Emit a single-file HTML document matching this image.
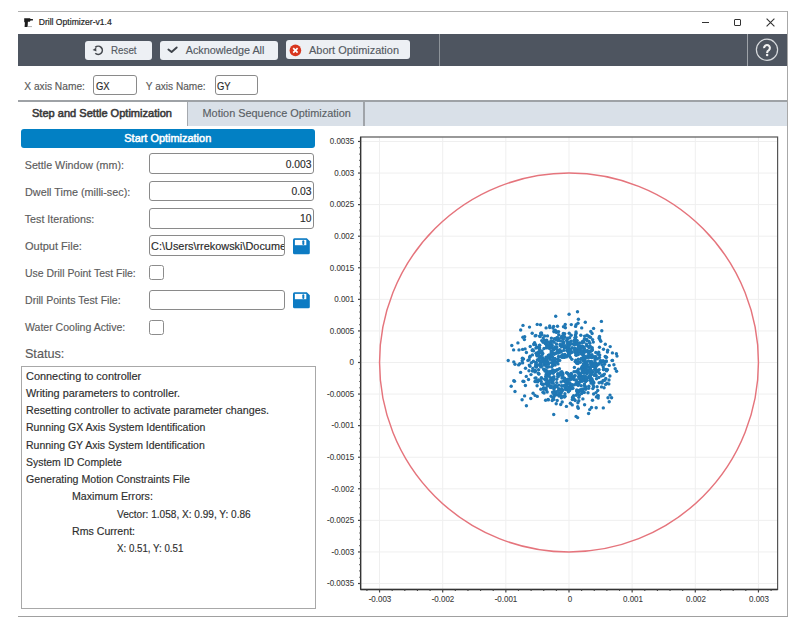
<!DOCTYPE html><html><head><meta charset="utf-8"><style>
html,body{margin:0;padding:0;}
body{width:800px;height:629px;position:relative;overflow:hidden;background:#fff;font-family:"Liberation Sans", sans-serif;}
div{-webkit-text-stroke:0.15px currentColor;}
</style></head><body>
<div style="position:absolute;left:18px;top:11px;width:769.5px;height:1.2px;background:#b0b0b0"></div><div style="position:absolute;left:786.5px;top:11px;width:1.2px;height:606px;background:#a8a8a8"></div><div style="position:absolute;left:18px;top:616.2px;width:769.5px;height:1.3px;background:#a0a0a0"></div><svg style="position:absolute;left:23px;top:17px" width="11" height="11" viewBox="0 0 11 11"><path d="M1.2 1.3 H7 L7.6 2 H9.9 V3.4 H7.6 L6.8 4.8 H4.9 L4.6 9.9 H1.6 L1.9 5.6 L1.2 4.9 Z" fill="#1c1c1c"/><rect x="4.8" y="9" width="4.2" height="1.1" fill="#b8b8b8"/></svg><div style="position:absolute;left:38.7px;top:18.32px;font-size:8.6px;line-height:8.6px;color:#262626;font-weight:normal;white-space:pre;-webkit-text-stroke:0.2px #262626">Drill Optimizer-v1.4</div><div style="position:absolute;left:701.5px;top:21.7px;width:7.5px;height:1.2px;background:#333"></div><div style="position:absolute;left:733.8px;top:18.8px;width:7.2px;height:7.2px;border:1.1px solid #333;box-sizing:border-box;border-radius:1px"></div><svg style="position:absolute;left:766px;top:18px" width="9" height="9" viewBox="0 0 9 9"><path d="M0.6 0.6 L8.4 8.4 M8.4 0.6 L0.6 8.4" stroke="#333" stroke-width="1.1"/></svg><div style="position:absolute;left:18px;top:33.8px;width:768.5px;height:32px;background:#4e5560"></div><div style="position:absolute;left:438.6px;top:33.8px;width:1.1px;height:32px;background:#8d9399"></div><div style="position:absolute;left:746.5px;top:33.8px;width:1.2px;height:32px;background:#9ea3a9"></div><svg style="position:absolute;left:755px;top:38px" width="24" height="24" viewBox="0 0 24 24"><circle cx="12" cy="11.8" r="10.6" fill="none" stroke="#d7dadd" stroke-width="1.2"/><path d="M9.1 10.1 A2.9 2.9 0 1 1 13.9 12.1 Q12.1 13.1 12.1 15" fill="none" stroke="#f2f2f2" stroke-width="2.1"/><circle cx="12.1" cy="17.1" r="1.25" fill="#f2f2f2"/></svg><div style="position:absolute;left:84.5px;top:40.5px;width:67.5px;height:19.2px;background:#edf0f4;border-radius:3px"></div><div style="position:absolute;left:159.5px;top:40.5px;width:118.5px;height:19.2px;background:#edf0f4;border-radius:3px"></div><div style="position:absolute;left:285.6px;top:40.3px;width:124.4px;height:19.2px;background:#edf0f4;border-radius:3px"></div><svg style="position:absolute;left:92px;top:43.5px" width="13" height="13" viewBox="0 0 13 13"><path d="M3.3 3.4 A4.1 4.1 0 1 1 3.3 9.2" fill="none" stroke="#44484e" stroke-width="1.6"/><path d="M0.6 6 L4.2 3.6 L4.4 7.6 Z" fill="#44484e"/></svg><svg style="position:absolute;left:166px;top:45px" width="13" height="10" viewBox="0 0 13 10"><path d="M2.4 4.5 L5.6 7 L10.7 2.5" fill="none" stroke="#3e434a" stroke-width="1.9" stroke-linecap="round" stroke-linejoin="round"/></svg><svg style="position:absolute;left:289px;top:43.5px" width="13" height="13" viewBox="0 0 13 13"><circle cx="6.4" cy="6.4" r="5.8" fill="#d8361f"/><path d="M4.2 4.2 L8.6 8.6 M8.6 4.2 L4.2 8.6" stroke="#fff" stroke-width="1.7"/></svg><div style="position:absolute;left:110.9px;top:45.16px;font-size:10.8px;line-height:10.8px;color:#545a62;font-weight:normal;white-space:pre;transform:scaleX(0.905);transform-origin:0 50%">Reset</div><div style="position:absolute;left:185.75px;top:45.16px;font-size:10.8px;line-height:10.8px;color:#545a62;font-weight:normal;white-space:pre;">Acknowledge All</div><div style="position:absolute;left:308.9px;top:45.16px;font-size:10.8px;line-height:10.8px;color:#545a62;font-weight:normal;white-space:pre;transform:scaleX(1.013);transform-origin:0 50%">Abort Optimization</div><div style="position:absolute;left:24.3px;top:81.67px;font-size:10.2px;line-height:10.2px;color:#5a5a5a;font-weight:normal;white-space:pre;">X axis Name:</div><div style="position:absolute;left:145.8px;top:81.75px;font-size:10.1px;line-height:10.1px;color:#5a5a5a;font-weight:normal;white-space:pre;">Y axis Name:</div><div style="position:absolute;left:93.3px;top:74.5px;width:43.5px;height:20.7px;border:1.2px solid #8a8a8a;border-radius:3px;box-sizing:border-box;background:#fff"></div><div style="position:absolute;left:214.7px;top:74.5px;width:43px;height:20.7px;border:1.2px solid #8a8a8a;border-radius:3px;box-sizing:border-box;background:#fff"></div><div style="position:absolute;left:96.1px;top:81.31px;font-size:10.5px;line-height:10.5px;color:#2a2a2a;font-weight:normal;white-space:pre;transform:scaleX(0.9);transform-origin:0 50%">GX</div><div style="position:absolute;left:217.3px;top:81.31px;font-size:10.5px;line-height:10.5px;color:#2a2a2a;font-weight:normal;white-space:pre;transform:scaleX(0.9);transform-origin:0 50%">GY</div><div style="position:absolute;left:18px;top:100.5px;width:768.5px;height:25px;background:#d9e0e8"></div><div style="position:absolute;left:18px;top:100.3px;width:768.5px;height:1.5px;background:#9ea2a6"></div><div style="position:absolute;left:18px;top:101.8px;width:169.5px;height:24px;background:#fff"></div><div style="position:absolute;left:187px;top:101.8px;width:1.3px;height:24px;background:#a5a9ae"></div><div style="position:absolute;left:363.4px;top:101.8px;width:1.5px;height:24px;background:#a0a4a9"></div><div style="position:absolute;left:32px;top:108.35px;font-size:11.05px;line-height:11.05px;color:#3a3a3a;font-weight:normal;white-space:pre;-webkit-text-stroke:0.55px #3a3a3a">Step and Settle Optimization</div><div style="position:absolute;left:202.5px;top:108.37px;font-size:10.9px;line-height:10.9px;color:#5a5f65;font-weight:normal;white-space:pre;">Motion Sequence Optimization</div><div style="position:absolute;left:20.6px;top:128.8px;width:294.4px;height:19.2px;background:#0280c4;border-radius:3px"></div><div style="position:absolute;left:124.3px;top:133.33px;font-size:10.95px;line-height:10.95px;color:#fff;font-weight:normal;white-space:pre;-webkit-text-stroke:0.5px #fff">Start Optimization</div><div style="position:absolute;left:24.75px;top:159.69px;font-size:10.7px;line-height:10.7px;color:#5c5c5c;font-weight:normal;white-space:pre;transform:scaleX(1.0);transform-origin:0 50%">Settle Window (mm):</div><div style="position:absolute;left:24.75px;top:186.69px;font-size:10.7px;line-height:10.7px;color:#5c5c5c;font-weight:normal;white-space:pre;transform:scaleX(1.013);transform-origin:0 50%">Dwell Time (milli-sec):</div><div style="position:absolute;left:24.75px;top:213.69px;font-size:10.7px;line-height:10.7px;color:#5c5c5c;font-weight:normal;white-space:pre;transform:scaleX(1.0);transform-origin:0 50%">Test Iterations:</div><div style="position:absolute;left:24.75px;top:240.69px;font-size:10.7px;line-height:10.7px;color:#5c5c5c;font-weight:normal;white-space:pre;transform:scaleX(1.03);transform-origin:0 50%">Output File:</div><div style="position:absolute;left:24.75px;top:267.69px;font-size:10.7px;line-height:10.7px;color:#5c5c5c;font-weight:normal;white-space:pre;transform:scaleX(0.978);transform-origin:0 50%">Use Drill Point Test File:</div><div style="position:absolute;left:24.75px;top:294.69px;font-size:10.7px;line-height:10.7px;color:#5c5c5c;font-weight:normal;white-space:pre;transform:scaleX(0.99);transform-origin:0 50%">Drill Points Test File:</div><div style="position:absolute;left:24.75px;top:321.69px;font-size:10.7px;line-height:10.7px;color:#5c5c5c;font-weight:normal;white-space:pre;transform:scaleX(0.985);transform-origin:0 50%">Water Cooling Active:</div><div style="position:absolute;left:149.4px;top:153.4px;width:164.6px;height:20.9px;border:1.2px solid #8a8a8a;border-radius:3px;box-sizing:border-box;background:#fff"></div><div style="position:absolute;right:488.5px;top:159.98px;font-size:10.3px;line-height:10.3px;color:#2a2a2a;font-weight:normal;white-space:pre;text-align:right;">0.003</div><div style="position:absolute;left:149.4px;top:180.6px;width:164.6px;height:20.9px;border:1.2px solid #8a8a8a;border-radius:3px;box-sizing:border-box;background:#fff"></div><div style="position:absolute;right:488.5px;top:187.18px;font-size:10.3px;line-height:10.3px;color:#2a2a2a;font-weight:normal;white-space:pre;text-align:right;">0.03</div><div style="position:absolute;left:149.4px;top:207.8px;width:164.6px;height:20.9px;border:1.2px solid #8a8a8a;border-radius:3px;box-sizing:border-box;background:#fff"></div><div style="position:absolute;right:488.5px;top:214.38px;font-size:10.3px;line-height:10.3px;color:#2a2a2a;font-weight:normal;white-space:pre;text-align:right;">10</div><div style="position:absolute;left:149.4px;top:235px;width:135.7px;height:21.2px;border:1.2px solid #8a8a8a;border-radius:3px;box-sizing:border-box;background:#fff"></div><div style="position:absolute;left:150.5px;top:236px;width:133.5px;height:19px;overflow:hidden"><div style="position:absolute;left:0.6px;top:4.97px;font-size:10.9px;line-height:10.9px;color:#2a2a2a;white-space:pre">C:\Users\rrekowski\Documents</div></div><div style="position:absolute;left:149.4px;top:289.8px;width:136px;height:20.4px;border:1.2px solid #8a8a8a;border-radius:3px;box-sizing:border-box;background:#fff"></div><svg style="position:absolute;left:293.4px;top:237.6px" width="17" height="17" viewBox="0 0 17 17"><path d="M1.5 0.2 H13.8 L16.8 3.2 V14.8 Q16.8 16.3 15.3 16.3 H1.5 Q0 16.3 0 14.8 V1.7 Q0 0.2 1.5 0.2 Z" fill="#0d7bc3"/><rect x="1.9" y="1.9" width="11.4" height="5.3" fill="#fff"/><rect x="9.3" y="2.3" width="2" height="4.6" rx="1" fill="#0d7bc3"/></svg><svg style="position:absolute;left:293.4px;top:291.6px" width="17" height="17" viewBox="0 0 17 17"><path d="M1.5 0.2 H13.8 L16.8 3.2 V14.8 Q16.8 16.3 15.3 16.3 H1.5 Q0 16.3 0 14.8 V1.7 Q0 0.2 1.5 0.2 Z" fill="#0d7bc3"/><rect x="1.9" y="1.9" width="11.4" height="5.3" fill="#fff"/><rect x="9.3" y="2.3" width="2" height="4.6" rx="1" fill="#0d7bc3"/></svg><div style="position:absolute;left:149.2px;top:265.1px;width:14.8px;height:15.2px;border:1.5px solid #8c8c8c;border-radius:2.5px;box-sizing:border-box;background:#fff"></div><div style="position:absolute;left:149.2px;top:319.8px;width:14.8px;height:15px;border:1.5px solid #8c8c8c;border-radius:2.5px;box-sizing:border-box;background:#fff"></div><div style="position:absolute;left:24.9px;top:347.65px;font-size:12.7px;line-height:12.7px;color:#5a5a5a;font-weight:normal;white-space:pre;">Status:</div><div style="position:absolute;left:20.6px;top:365.9px;width:295px;height:243px;border:1.2px solid #a8a8a8;box-sizing:border-box;background:#fff"></div><div style="position:absolute;left:25.75px;top:370.69px;font-size:10.7px;line-height:10.7px;color:#2e2e2e;font-weight:normal;white-space:pre;transform:scaleX(1.021);transform-origin:0 50%">Connecting to controller</div><div style="position:absolute;left:25.75px;top:387.93px;font-size:10.7px;line-height:10.7px;color:#2e2e2e;font-weight:normal;white-space:pre;transform:scaleX(1.018);transform-origin:0 50%">Writing parameters to controller.</div><div style="position:absolute;left:25.75px;top:405.17px;font-size:10.7px;line-height:10.7px;color:#2e2e2e;font-weight:normal;white-space:pre;transform:scaleX(1.005);transform-origin:0 50%">Resetting controller to activate parameter changes.</div><div style="position:absolute;left:25.75px;top:422.41px;font-size:10.7px;line-height:10.7px;color:#2e2e2e;font-weight:normal;white-space:pre;transform:scaleX(0.9835);transform-origin:0 50%">Running GX Axis System Identification</div><div style="position:absolute;left:25.75px;top:439.65px;font-size:10.7px;line-height:10.7px;color:#2e2e2e;font-weight:normal;white-space:pre;transform:scaleX(0.981);transform-origin:0 50%">Running GY Axis System Identification</div><div style="position:absolute;left:25.75px;top:456.89px;font-size:10.7px;line-height:10.7px;color:#2e2e2e;font-weight:normal;white-space:pre;transform:scaleX(0.977);transform-origin:0 50%">System ID Complete</div><div style="position:absolute;left:25.75px;top:474.13px;font-size:10.7px;line-height:10.7px;color:#2e2e2e;font-weight:normal;white-space:pre;transform:scaleX(0.992);transform-origin:0 50%">Generating Motion Constraints File</div><div style="position:absolute;left:71.6px;top:491.37px;font-size:10.7px;line-height:10.7px;color:#2e2e2e;font-weight:normal;white-space:pre;transform:scaleX(0.994);transform-origin:0 50%">Maximum Errors:</div><div style="position:absolute;left:117px;top:508.61px;font-size:10.7px;line-height:10.7px;color:#2e2e2e;font-weight:normal;white-space:pre;transform:scaleX(0.943);transform-origin:0 50%">Vector: 1.058, X: 0.99, Y: 0.86</div><div style="position:absolute;left:71.6px;top:525.85px;font-size:10.7px;line-height:10.7px;color:#2e2e2e;font-weight:normal;white-space:pre;transform:scaleX(0.992);transform-origin:0 50%">Rms Current:</div><div style="position:absolute;left:117px;top:543.09px;font-size:10.7px;line-height:10.7px;color:#2e2e2e;font-weight:normal;white-space:pre;transform:scaleX(0.91);transform-origin:0 50%">X: 0.51, Y: 0.51</div><svg style="position:absolute;left:0;top:0" width="800" height="629"><line x1="379.55" y1="137" x2="379.55" y2="589" stroke="#efefef" stroke-width="1"/><line x1="442.70" y1="137" x2="442.70" y2="589" stroke="#efefef" stroke-width="1"/><line x1="505.85" y1="137" x2="505.85" y2="589" stroke="#efefef" stroke-width="1"/><line x1="569.00" y1="137" x2="569.00" y2="589" stroke="#efefef" stroke-width="1"/><line x1="632.15" y1="137" x2="632.15" y2="589" stroke="#efefef" stroke-width="1"/><line x1="695.30" y1="137" x2="695.30" y2="589" stroke="#efefef" stroke-width="1"/><line x1="758.45" y1="137" x2="758.45" y2="589" stroke="#efefef" stroke-width="1"/><line x1="360.5" y1="583.52" x2="777.5" y2="583.52" stroke="#efefef" stroke-width="1"/><line x1="360.5" y1="551.95" x2="777.5" y2="551.95" stroke="#efefef" stroke-width="1"/><line x1="360.5" y1="520.38" x2="777.5" y2="520.38" stroke="#efefef" stroke-width="1"/><line x1="360.5" y1="488.80" x2="777.5" y2="488.80" stroke="#efefef" stroke-width="1"/><line x1="360.5" y1="457.23" x2="777.5" y2="457.23" stroke="#efefef" stroke-width="1"/><line x1="360.5" y1="425.65" x2="777.5" y2="425.65" stroke="#efefef" stroke-width="1"/><line x1="360.5" y1="394.07" x2="777.5" y2="394.07" stroke="#efefef" stroke-width="1"/><line x1="360.5" y1="362.50" x2="777.5" y2="362.50" stroke="#efefef" stroke-width="1"/><line x1="360.5" y1="330.93" x2="777.5" y2="330.93" stroke="#efefef" stroke-width="1"/><line x1="360.5" y1="299.35" x2="777.5" y2="299.35" stroke="#efefef" stroke-width="1"/><line x1="360.5" y1="267.77" x2="777.5" y2="267.77" stroke="#efefef" stroke-width="1"/><line x1="360.5" y1="236.20" x2="777.5" y2="236.20" stroke="#efefef" stroke-width="1"/><line x1="360.5" y1="204.62" x2="777.5" y2="204.62" stroke="#efefef" stroke-width="1"/><line x1="360.5" y1="173.05" x2="777.5" y2="173.05" stroke="#efefef" stroke-width="1"/><line x1="360.5" y1="141.47" x2="777.5" y2="141.47" stroke="#efefef" stroke-width="1"/><rect x="360.6" y="137" width="417" height="452.5" fill="none" stroke="#555" stroke-width="1.2"/><line x1="360.6" y1="137" x2="360.6" y2="589.2" stroke="#333" stroke-width="1.3"/><line x1="360.6" y1="589.5" x2="777.6" y2="589.5" stroke="#333" stroke-width="1.3"/><line x1="358" y1="583.52" x2="360.5" y2="583.52" stroke="#444" stroke-width="1.2"/><line x1="358" y1="551.95" x2="360.5" y2="551.95" stroke="#444" stroke-width="1.2"/><line x1="358" y1="520.38" x2="360.5" y2="520.38" stroke="#444" stroke-width="1.2"/><line x1="358" y1="488.80" x2="360.5" y2="488.80" stroke="#444" stroke-width="1.2"/><line x1="358" y1="457.23" x2="360.5" y2="457.23" stroke="#444" stroke-width="1.2"/><line x1="358" y1="425.65" x2="360.5" y2="425.65" stroke="#444" stroke-width="1.2"/><line x1="358" y1="394.07" x2="360.5" y2="394.07" stroke="#444" stroke-width="1.2"/><line x1="358" y1="362.50" x2="360.5" y2="362.50" stroke="#444" stroke-width="1.2"/><line x1="358" y1="330.93" x2="360.5" y2="330.93" stroke="#444" stroke-width="1.2"/><line x1="358" y1="299.35" x2="360.5" y2="299.35" stroke="#444" stroke-width="1.2"/><line x1="358" y1="267.77" x2="360.5" y2="267.77" stroke="#444" stroke-width="1.2"/><line x1="358" y1="236.20" x2="360.5" y2="236.20" stroke="#444" stroke-width="1.2"/><line x1="358" y1="204.62" x2="360.5" y2="204.62" stroke="#444" stroke-width="1.2"/><line x1="358" y1="173.05" x2="360.5" y2="173.05" stroke="#444" stroke-width="1.2"/><line x1="358" y1="141.47" x2="360.5" y2="141.47" stroke="#444" stroke-width="1.2"/><line x1="359.3" y1="577.21" x2="360.5" y2="577.21" stroke="#444" stroke-width="1.1"/><line x1="359.3" y1="570.89" x2="360.5" y2="570.89" stroke="#444" stroke-width="1.1"/><line x1="359.3" y1="564.58" x2="360.5" y2="564.58" stroke="#444" stroke-width="1.1"/><line x1="359.3" y1="558.26" x2="360.5" y2="558.26" stroke="#444" stroke-width="1.1"/><line x1="359.3" y1="545.63" x2="360.5" y2="545.63" stroke="#444" stroke-width="1.1"/><line x1="359.3" y1="539.32" x2="360.5" y2="539.32" stroke="#444" stroke-width="1.1"/><line x1="359.3" y1="533.00" x2="360.5" y2="533.00" stroke="#444" stroke-width="1.1"/><line x1="359.3" y1="526.69" x2="360.5" y2="526.69" stroke="#444" stroke-width="1.1"/><line x1="359.3" y1="514.06" x2="360.5" y2="514.06" stroke="#444" stroke-width="1.1"/><line x1="359.3" y1="507.75" x2="360.5" y2="507.75" stroke="#444" stroke-width="1.1"/><line x1="359.3" y1="501.43" x2="360.5" y2="501.43" stroke="#444" stroke-width="1.1"/><line x1="359.3" y1="495.12" x2="360.5" y2="495.12" stroke="#444" stroke-width="1.1"/><line x1="359.3" y1="482.49" x2="360.5" y2="482.49" stroke="#444" stroke-width="1.1"/><line x1="359.3" y1="476.17" x2="360.5" y2="476.17" stroke="#444" stroke-width="1.1"/><line x1="359.3" y1="469.86" x2="360.5" y2="469.86" stroke="#444" stroke-width="1.1"/><line x1="359.3" y1="463.54" x2="360.5" y2="463.54" stroke="#444" stroke-width="1.1"/><line x1="359.3" y1="450.91" x2="360.5" y2="450.91" stroke="#444" stroke-width="1.1"/><line x1="359.3" y1="444.60" x2="360.5" y2="444.60" stroke="#444" stroke-width="1.1"/><line x1="359.3" y1="438.28" x2="360.5" y2="438.28" stroke="#444" stroke-width="1.1"/><line x1="359.3" y1="431.97" x2="360.5" y2="431.97" stroke="#444" stroke-width="1.1"/><line x1="359.3" y1="419.33" x2="360.5" y2="419.33" stroke="#444" stroke-width="1.1"/><line x1="359.3" y1="413.02" x2="360.5" y2="413.02" stroke="#444" stroke-width="1.1"/><line x1="359.3" y1="406.70" x2="360.5" y2="406.70" stroke="#444" stroke-width="1.1"/><line x1="359.3" y1="400.39" x2="360.5" y2="400.39" stroke="#444" stroke-width="1.1"/><line x1="359.3" y1="387.76" x2="360.5" y2="387.76" stroke="#444" stroke-width="1.1"/><line x1="359.3" y1="381.44" x2="360.5" y2="381.44" stroke="#444" stroke-width="1.1"/><line x1="359.3" y1="375.13" x2="360.5" y2="375.13" stroke="#444" stroke-width="1.1"/><line x1="359.3" y1="368.81" x2="360.5" y2="368.81" stroke="#444" stroke-width="1.1"/><line x1="359.3" y1="356.19" x2="360.5" y2="356.19" stroke="#444" stroke-width="1.1"/><line x1="359.3" y1="349.87" x2="360.5" y2="349.87" stroke="#444" stroke-width="1.1"/><line x1="359.3" y1="343.56" x2="360.5" y2="343.56" stroke="#444" stroke-width="1.1"/><line x1="359.3" y1="337.24" x2="360.5" y2="337.24" stroke="#444" stroke-width="1.1"/><line x1="359.3" y1="324.61" x2="360.5" y2="324.61" stroke="#444" stroke-width="1.1"/><line x1="359.3" y1="318.30" x2="360.5" y2="318.30" stroke="#444" stroke-width="1.1"/><line x1="359.3" y1="311.98" x2="360.5" y2="311.98" stroke="#444" stroke-width="1.1"/><line x1="359.3" y1="305.67" x2="360.5" y2="305.67" stroke="#444" stroke-width="1.1"/><line x1="359.3" y1="293.03" x2="360.5" y2="293.03" stroke="#444" stroke-width="1.1"/><line x1="359.3" y1="286.72" x2="360.5" y2="286.72" stroke="#444" stroke-width="1.1"/><line x1="359.3" y1="280.40" x2="360.5" y2="280.40" stroke="#444" stroke-width="1.1"/><line x1="359.3" y1="274.09" x2="360.5" y2="274.09" stroke="#444" stroke-width="1.1"/><line x1="359.3" y1="261.46" x2="360.5" y2="261.46" stroke="#444" stroke-width="1.1"/><line x1="359.3" y1="255.15" x2="360.5" y2="255.15" stroke="#444" stroke-width="1.1"/><line x1="359.3" y1="248.83" x2="360.5" y2="248.83" stroke="#444" stroke-width="1.1"/><line x1="359.3" y1="242.52" x2="360.5" y2="242.52" stroke="#444" stroke-width="1.1"/><line x1="359.3" y1="229.88" x2="360.5" y2="229.88" stroke="#444" stroke-width="1.1"/><line x1="359.3" y1="223.57" x2="360.5" y2="223.57" stroke="#444" stroke-width="1.1"/><line x1="359.3" y1="217.26" x2="360.5" y2="217.26" stroke="#444" stroke-width="1.1"/><line x1="359.3" y1="210.94" x2="360.5" y2="210.94" stroke="#444" stroke-width="1.1"/><line x1="359.3" y1="198.31" x2="360.5" y2="198.31" stroke="#444" stroke-width="1.1"/><line x1="359.3" y1="192.00" x2="360.5" y2="192.00" stroke="#444" stroke-width="1.1"/><line x1="359.3" y1="185.68" x2="360.5" y2="185.68" stroke="#444" stroke-width="1.1"/><line x1="359.3" y1="179.37" x2="360.5" y2="179.37" stroke="#444" stroke-width="1.1"/><line x1="359.3" y1="166.73" x2="360.5" y2="166.73" stroke="#444" stroke-width="1.1"/><line x1="359.3" y1="160.42" x2="360.5" y2="160.42" stroke="#444" stroke-width="1.1"/><line x1="359.3" y1="154.11" x2="360.5" y2="154.11" stroke="#444" stroke-width="1.1"/><line x1="359.3" y1="147.79" x2="360.5" y2="147.79" stroke="#444" stroke-width="1.1"/><line x1="379.55" y1="589.5" x2="379.55" y2="592.5" stroke="#444" stroke-width="1.2"/><line x1="442.70" y1="589.5" x2="442.70" y2="592.5" stroke="#444" stroke-width="1.2"/><line x1="505.85" y1="589.5" x2="505.85" y2="592.5" stroke="#444" stroke-width="1.2"/><line x1="569.00" y1="589.5" x2="569.00" y2="592.5" stroke="#444" stroke-width="1.2"/><line x1="632.15" y1="589.5" x2="632.15" y2="592.5" stroke="#444" stroke-width="1.2"/><line x1="695.30" y1="589.5" x2="695.30" y2="592.5" stroke="#444" stroke-width="1.2"/><line x1="758.45" y1="589.5" x2="758.45" y2="592.5" stroke="#444" stroke-width="1.2"/><line x1="366.92" y1="589.5" x2="366.92" y2="590.9" stroke="#444" stroke-width="1.1"/><line x1="392.18" y1="589.5" x2="392.18" y2="590.9" stroke="#444" stroke-width="1.1"/><line x1="404.81" y1="589.5" x2="404.81" y2="590.9" stroke="#444" stroke-width="1.1"/><line x1="417.44" y1="589.5" x2="417.44" y2="590.9" stroke="#444" stroke-width="1.1"/><line x1="430.07" y1="589.5" x2="430.07" y2="590.9" stroke="#444" stroke-width="1.1"/><line x1="455.33" y1="589.5" x2="455.33" y2="590.9" stroke="#444" stroke-width="1.1"/><line x1="467.96" y1="589.5" x2="467.96" y2="590.9" stroke="#444" stroke-width="1.1"/><line x1="480.59" y1="589.5" x2="480.59" y2="590.9" stroke="#444" stroke-width="1.1"/><line x1="493.22" y1="589.5" x2="493.22" y2="590.9" stroke="#444" stroke-width="1.1"/><line x1="518.48" y1="589.5" x2="518.48" y2="590.9" stroke="#444" stroke-width="1.1"/><line x1="531.11" y1="589.5" x2="531.11" y2="590.9" stroke="#444" stroke-width="1.1"/><line x1="543.74" y1="589.5" x2="543.74" y2="590.9" stroke="#444" stroke-width="1.1"/><line x1="556.37" y1="589.5" x2="556.37" y2="590.9" stroke="#444" stroke-width="1.1"/><line x1="581.63" y1="589.5" x2="581.63" y2="590.9" stroke="#444" stroke-width="1.1"/><line x1="594.26" y1="589.5" x2="594.26" y2="590.9" stroke="#444" stroke-width="1.1"/><line x1="606.89" y1="589.5" x2="606.89" y2="590.9" stroke="#444" stroke-width="1.1"/><line x1="619.52" y1="589.5" x2="619.52" y2="590.9" stroke="#444" stroke-width="1.1"/><line x1="644.78" y1="589.5" x2="644.78" y2="590.9" stroke="#444" stroke-width="1.1"/><line x1="657.41" y1="589.5" x2="657.41" y2="590.9" stroke="#444" stroke-width="1.1"/><line x1="670.04" y1="589.5" x2="670.04" y2="590.9" stroke="#444" stroke-width="1.1"/><line x1="682.67" y1="589.5" x2="682.67" y2="590.9" stroke="#444" stroke-width="1.1"/><line x1="707.93" y1="589.5" x2="707.93" y2="590.9" stroke="#444" stroke-width="1.1"/><line x1="720.56" y1="589.5" x2="720.56" y2="590.9" stroke="#444" stroke-width="1.1"/><line x1="733.19" y1="589.5" x2="733.19" y2="590.9" stroke="#444" stroke-width="1.1"/><line x1="745.82" y1="589.5" x2="745.82" y2="590.9" stroke="#444" stroke-width="1.1"/><line x1="771.08" y1="589.5" x2="771.08" y2="590.9" stroke="#444" stroke-width="1.1"/><circle cx="569.0" cy="362.5" r="189.45" fill="none" stroke="#e5747c" stroke-width="1.45"/><circle cx="587.8" cy="355.6" r="1.7" fill="#1f77b4"/><circle cx="545.2" cy="343.5" r="1.7" fill="#1f77b4"/><circle cx="610.2" cy="346.6" r="1.7" fill="#1f77b4"/><circle cx="538.8" cy="352.3" r="1.7" fill="#1f77b4"/><circle cx="546.2" cy="383.8" r="1.7" fill="#1f77b4"/><circle cx="547.3" cy="374.1" r="1.7" fill="#1f77b4"/><circle cx="564.3" cy="357.4" r="1.7" fill="#1f77b4"/><circle cx="599.2" cy="338.2" r="1.7" fill="#1f77b4"/><circle cx="549.5" cy="373.6" r="1.7" fill="#1f77b4"/><circle cx="535.2" cy="335.9" r="1.7" fill="#1f77b4"/><circle cx="548.3" cy="399.9" r="1.7" fill="#1f77b4"/><circle cx="556.5" cy="344.0" r="1.7" fill="#1f77b4"/><circle cx="571.0" cy="379.2" r="1.7" fill="#1f77b4"/><circle cx="567.2" cy="346.6" r="1.7" fill="#1f77b4"/><circle cx="564.6" cy="378.3" r="1.7" fill="#1f77b4"/><circle cx="586.9" cy="367.3" r="1.7" fill="#1f77b4"/><circle cx="586.6" cy="339.5" r="1.7" fill="#1f77b4"/><circle cx="599.5" cy="357.5" r="1.7" fill="#1f77b4"/><circle cx="578.9" cy="376.2" r="1.7" fill="#1f77b4"/><circle cx="562.9" cy="374.0" r="1.7" fill="#1f77b4"/><circle cx="574.4" cy="376.3" r="1.7" fill="#1f77b4"/><circle cx="548.1" cy="362.3" r="1.7" fill="#1f77b4"/><circle cx="551.7" cy="382.7" r="1.7" fill="#1f77b4"/><circle cx="576.6" cy="383.9" r="1.7" fill="#1f77b4"/><circle cx="590.5" cy="361.9" r="1.7" fill="#1f77b4"/><circle cx="584.6" cy="336.1" r="1.7" fill="#1f77b4"/><circle cx="586.6" cy="345.9" r="1.7" fill="#1f77b4"/><circle cx="544.0" cy="348.5" r="1.7" fill="#1f77b4"/><circle cx="538.3" cy="373.2" r="1.7" fill="#1f77b4"/><circle cx="576.3" cy="384.1" r="1.7" fill="#1f77b4"/><circle cx="546.1" cy="342.5" r="1.7" fill="#1f77b4"/><circle cx="585.8" cy="369.7" r="1.7" fill="#1f77b4"/><circle cx="569.7" cy="337.8" r="1.7" fill="#1f77b4"/><circle cx="539.4" cy="380.3" r="1.7" fill="#1f77b4"/><circle cx="548.5" cy="347.6" r="1.7" fill="#1f77b4"/><circle cx="592.8" cy="372.2" r="1.7" fill="#1f77b4"/><circle cx="556.7" cy="382.6" r="1.7" fill="#1f77b4"/><circle cx="577.6" cy="417.6" r="1.7" fill="#1f77b4"/><circle cx="534.2" cy="343.6" r="1.7" fill="#1f77b4"/><circle cx="557.9" cy="373.7" r="1.7" fill="#1f77b4"/><circle cx="582.3" cy="341.8" r="1.7" fill="#1f77b4"/><circle cx="593.0" cy="356.8" r="1.7" fill="#1f77b4"/><circle cx="545.1" cy="342.8" r="1.7" fill="#1f77b4"/><circle cx="522.1" cy="399.8" r="1.7" fill="#1f77b4"/><circle cx="545.8" cy="343.7" r="1.7" fill="#1f77b4"/><circle cx="585.8" cy="389.2" r="1.7" fill="#1f77b4"/><circle cx="599.5" cy="347.2" r="1.7" fill="#1f77b4"/><circle cx="552.2" cy="345.5" r="1.7" fill="#1f77b4"/><circle cx="590.9" cy="361.8" r="1.7" fill="#1f77b4"/><circle cx="520.6" cy="372.4" r="1.7" fill="#1f77b4"/><circle cx="616.6" cy="371.2" r="1.7" fill="#1f77b4"/><circle cx="554.1" cy="396.6" r="1.7" fill="#1f77b4"/><circle cx="570.0" cy="388.0" r="1.7" fill="#1f77b4"/><circle cx="573.1" cy="397.6" r="1.7" fill="#1f77b4"/><circle cx="589.2" cy="367.0" r="1.7" fill="#1f77b4"/><circle cx="577.9" cy="393.1" r="1.7" fill="#1f77b4"/><circle cx="532.8" cy="368.4" r="1.7" fill="#1f77b4"/><circle cx="576.8" cy="363.3" r="1.7" fill="#1f77b4"/><circle cx="554.1" cy="394.6" r="1.7" fill="#1f77b4"/><circle cx="540.0" cy="356.8" r="1.7" fill="#1f77b4"/><circle cx="529.5" cy="327.1" r="1.7" fill="#1f77b4"/><circle cx="568.5" cy="352.4" r="1.7" fill="#1f77b4"/><circle cx="589.9" cy="380.3" r="1.7" fill="#1f77b4"/><circle cx="533.4" cy="361.2" r="1.7" fill="#1f77b4"/><circle cx="558.2" cy="376.8" r="1.7" fill="#1f77b4"/><circle cx="568.6" cy="374.5" r="1.7" fill="#1f77b4"/><circle cx="572.9" cy="388.2" r="1.7" fill="#1f77b4"/><circle cx="571.0" cy="377.2" r="1.7" fill="#1f77b4"/><circle cx="601.5" cy="376.0" r="1.7" fill="#1f77b4"/><circle cx="578.3" cy="345.6" r="1.7" fill="#1f77b4"/><circle cx="577.2" cy="391.0" r="1.7" fill="#1f77b4"/><circle cx="580.8" cy="389.7" r="1.7" fill="#1f77b4"/><circle cx="526.3" cy="376.4" r="1.7" fill="#1f77b4"/><circle cx="591.0" cy="363.0" r="1.7" fill="#1f77b4"/><circle cx="604.7" cy="380.3" r="1.7" fill="#1f77b4"/><circle cx="582.9" cy="380.4" r="1.7" fill="#1f77b4"/><circle cx="558.5" cy="339.1" r="1.7" fill="#1f77b4"/><circle cx="549.4" cy="374.3" r="1.7" fill="#1f77b4"/><circle cx="588.3" cy="377.5" r="1.7" fill="#1f77b4"/><circle cx="530.1" cy="356.2" r="1.7" fill="#1f77b4"/><circle cx="553.0" cy="365.2" r="1.7" fill="#1f77b4"/><circle cx="551.7" cy="367.0" r="1.7" fill="#1f77b4"/><circle cx="604.5" cy="364.2" r="1.7" fill="#1f77b4"/><circle cx="579.5" cy="342.9" r="1.7" fill="#1f77b4"/><circle cx="562.1" cy="357.4" r="1.7" fill="#1f77b4"/><circle cx="538.9" cy="374.1" r="1.7" fill="#1f77b4"/><circle cx="566.7" cy="340.2" r="1.7" fill="#1f77b4"/><circle cx="569.5" cy="384.2" r="1.7" fill="#1f77b4"/><circle cx="577.3" cy="371.0" r="1.7" fill="#1f77b4"/><circle cx="546.8" cy="380.1" r="1.7" fill="#1f77b4"/><circle cx="553.4" cy="361.4" r="1.7" fill="#1f77b4"/><circle cx="540.6" cy="361.8" r="1.7" fill="#1f77b4"/><circle cx="605.8" cy="378.5" r="1.7" fill="#1f77b4"/><circle cx="547.4" cy="371.8" r="1.7" fill="#1f77b4"/><circle cx="599.5" cy="336.5" r="1.7" fill="#1f77b4"/><circle cx="583.8" cy="357.4" r="1.7" fill="#1f77b4"/><circle cx="572.1" cy="388.6" r="1.7" fill="#1f77b4"/><circle cx="583.8" cy="342.2" r="1.7" fill="#1f77b4"/><circle cx="583.7" cy="379.0" r="1.7" fill="#1f77b4"/><circle cx="568.6" cy="355.2" r="1.7" fill="#1f77b4"/><circle cx="603.3" cy="367.1" r="1.7" fill="#1f77b4"/><circle cx="578.8" cy="347.2" r="1.7" fill="#1f77b4"/><circle cx="571.4" cy="352.5" r="1.7" fill="#1f77b4"/><circle cx="560.9" cy="393.3" r="1.7" fill="#1f77b4"/><circle cx="606.3" cy="360.9" r="1.7" fill="#1f77b4"/><circle cx="546.4" cy="382.8" r="1.7" fill="#1f77b4"/><circle cx="571.9" cy="384.8" r="1.7" fill="#1f77b4"/><circle cx="587.2" cy="350.6" r="1.7" fill="#1f77b4"/><circle cx="563.1" cy="341.6" r="1.7" fill="#1f77b4"/><circle cx="540.4" cy="352.5" r="1.7" fill="#1f77b4"/><circle cx="592.1" cy="333.5" r="1.7" fill="#1f77b4"/><circle cx="552.0" cy="371.2" r="1.7" fill="#1f77b4"/><circle cx="517.9" cy="342.9" r="1.7" fill="#1f77b4"/><circle cx="526.4" cy="405.7" r="1.7" fill="#1f77b4"/><circle cx="592.0" cy="354.8" r="1.7" fill="#1f77b4"/><circle cx="545.1" cy="359.3" r="1.7" fill="#1f77b4"/><circle cx="564.3" cy="347.8" r="1.7" fill="#1f77b4"/><circle cx="529.0" cy="370.8" r="1.7" fill="#1f77b4"/><circle cx="592.0" cy="357.5" r="1.7" fill="#1f77b4"/><circle cx="554.4" cy="338.7" r="1.7" fill="#1f77b4"/><circle cx="546.1" cy="365.0" r="1.7" fill="#1f77b4"/><circle cx="541.5" cy="332.9" r="1.7" fill="#1f77b4"/><circle cx="513.8" cy="380.8" r="1.7" fill="#1f77b4"/><circle cx="539.4" cy="361.1" r="1.7" fill="#1f77b4"/><circle cx="538.1" cy="353.4" r="1.7" fill="#1f77b4"/><circle cx="578.9" cy="384.0" r="1.7" fill="#1f77b4"/><circle cx="582.9" cy="366.7" r="1.7" fill="#1f77b4"/><circle cx="583.5" cy="392.0" r="1.7" fill="#1f77b4"/><circle cx="553.6" cy="348.5" r="1.7" fill="#1f77b4"/><circle cx="603.5" cy="349.2" r="1.7" fill="#1f77b4"/><circle cx="588.9" cy="353.2" r="1.7" fill="#1f77b4"/><circle cx="579.0" cy="377.0" r="1.7" fill="#1f77b4"/><circle cx="560.5" cy="345.7" r="1.7" fill="#1f77b4"/><circle cx="576.8" cy="350.8" r="1.7" fill="#1f77b4"/><circle cx="584.8" cy="367.9" r="1.7" fill="#1f77b4"/><circle cx="567.5" cy="338.6" r="1.7" fill="#1f77b4"/><circle cx="602.0" cy="364.8" r="1.7" fill="#1f77b4"/><circle cx="542.2" cy="361.5" r="1.7" fill="#1f77b4"/><circle cx="585.8" cy="364.5" r="1.7" fill="#1f77b4"/><circle cx="588.8" cy="352.3" r="1.7" fill="#1f77b4"/><circle cx="571.3" cy="324.6" r="1.7" fill="#1f77b4"/><circle cx="538.6" cy="369.7" r="1.7" fill="#1f77b4"/><circle cx="585.7" cy="381.5" r="1.7" fill="#1f77b4"/><circle cx="561.5" cy="356.4" r="1.7" fill="#1f77b4"/><circle cx="546.2" cy="388.0" r="1.7" fill="#1f77b4"/><circle cx="611.6" cy="397.8" r="1.7" fill="#1f77b4"/><circle cx="575.7" cy="355.1" r="1.7" fill="#1f77b4"/><circle cx="552.5" cy="365.4" r="1.7" fill="#1f77b4"/><circle cx="535.0" cy="381.5" r="1.7" fill="#1f77b4"/><circle cx="562.5" cy="373.1" r="1.7" fill="#1f77b4"/><circle cx="540.1" cy="336.6" r="1.7" fill="#1f77b4"/><circle cx="576.4" cy="379.9" r="1.7" fill="#1f77b4"/><circle cx="561.2" cy="375.2" r="1.7" fill="#1f77b4"/><circle cx="587.6" cy="364.6" r="1.7" fill="#1f77b4"/><circle cx="535.5" cy="371.3" r="1.7" fill="#1f77b4"/><circle cx="575.2" cy="361.6" r="1.7" fill="#1f77b4"/><circle cx="560.7" cy="404.5" r="1.7" fill="#1f77b4"/><circle cx="565.3" cy="381.5" r="1.7" fill="#1f77b4"/><circle cx="527.9" cy="360.4" r="1.7" fill="#1f77b4"/><circle cx="569.1" cy="387.1" r="1.7" fill="#1f77b4"/><circle cx="565.4" cy="327.8" r="1.7" fill="#1f77b4"/><circle cx="561.0" cy="351.3" r="1.7" fill="#1f77b4"/><circle cx="545.6" cy="400.2" r="1.7" fill="#1f77b4"/><circle cx="554.9" cy="385.8" r="1.7" fill="#1f77b4"/><circle cx="543.8" cy="360.6" r="1.7" fill="#1f77b4"/><circle cx="597.1" cy="386.8" r="1.7" fill="#1f77b4"/><circle cx="602.1" cy="361.5" r="1.7" fill="#1f77b4"/><circle cx="589.7" cy="409.6" r="1.7" fill="#1f77b4"/><circle cx="576.0" cy="331.9" r="1.7" fill="#1f77b4"/><circle cx="572.4" cy="343.9" r="1.7" fill="#1f77b4"/><circle cx="586.9" cy="370.6" r="1.7" fill="#1f77b4"/><circle cx="576.6" cy="384.2" r="1.7" fill="#1f77b4"/><circle cx="580.2" cy="374.2" r="1.7" fill="#1f77b4"/><circle cx="591.5" cy="361.5" r="1.7" fill="#1f77b4"/><circle cx="554.0" cy="331.8" r="1.7" fill="#1f77b4"/><circle cx="551.6" cy="345.0" r="1.7" fill="#1f77b4"/><circle cx="596.2" cy="407.7" r="1.7" fill="#1f77b4"/><circle cx="607.0" cy="383.2" r="1.7" fill="#1f77b4"/><circle cx="551.7" cy="351.3" r="1.7" fill="#1f77b4"/><circle cx="555.3" cy="371.3" r="1.7" fill="#1f77b4"/><circle cx="584.8" cy="359.9" r="1.7" fill="#1f77b4"/><circle cx="584.3" cy="392.4" r="1.7" fill="#1f77b4"/><circle cx="564.4" cy="346.3" r="1.7" fill="#1f77b4"/><circle cx="585.3" cy="322.3" r="1.7" fill="#1f77b4"/><circle cx="553.3" cy="377.8" r="1.7" fill="#1f77b4"/><circle cx="609.0" cy="380.0" r="1.7" fill="#1f77b4"/><circle cx="513.6" cy="349.9" r="1.7" fill="#1f77b4"/><circle cx="553.4" cy="380.1" r="1.7" fill="#1f77b4"/><circle cx="584.4" cy="348.4" r="1.7" fill="#1f77b4"/><circle cx="549.9" cy="342.7" r="1.7" fill="#1f77b4"/><circle cx="565.1" cy="345.9" r="1.7" fill="#1f77b4"/><circle cx="552.9" cy="328.0" r="1.7" fill="#1f77b4"/><circle cx="575.1" cy="352.4" r="1.7" fill="#1f77b4"/><circle cx="585.4" cy="376.4" r="1.7" fill="#1f77b4"/><circle cx="585.4" cy="365.4" r="1.7" fill="#1f77b4"/><circle cx="583.5" cy="346.6" r="1.7" fill="#1f77b4"/><circle cx="590.2" cy="351.3" r="1.7" fill="#1f77b4"/><circle cx="564.9" cy="337.3" r="1.7" fill="#1f77b4"/><circle cx="551.3" cy="356.8" r="1.7" fill="#1f77b4"/><circle cx="554.3" cy="354.3" r="1.7" fill="#1f77b4"/><circle cx="590.5" cy="369.5" r="1.7" fill="#1f77b4"/><circle cx="536.7" cy="365.6" r="1.7" fill="#1f77b4"/><circle cx="564.9" cy="354.5" r="1.7" fill="#1f77b4"/><circle cx="557.6" cy="359.2" r="1.7" fill="#1f77b4"/><circle cx="585.2" cy="362.7" r="1.7" fill="#1f77b4"/><circle cx="610.0" cy="395.1" r="1.7" fill="#1f77b4"/><circle cx="608.8" cy="383.9" r="1.7" fill="#1f77b4"/><circle cx="584.3" cy="385.5" r="1.7" fill="#1f77b4"/><circle cx="586.0" cy="339.4" r="1.7" fill="#1f77b4"/><circle cx="556.1" cy="385.6" r="1.7" fill="#1f77b4"/><circle cx="570.4" cy="403.2" r="1.7" fill="#1f77b4"/><circle cx="547.2" cy="370.9" r="1.7" fill="#1f77b4"/><circle cx="605.6" cy="384.4" r="1.7" fill="#1f77b4"/><circle cx="556.2" cy="338.6" r="1.7" fill="#1f77b4"/><circle cx="556.3" cy="392.5" r="1.7" fill="#1f77b4"/><circle cx="595.8" cy="352.5" r="1.7" fill="#1f77b4"/><circle cx="568.5" cy="353.9" r="1.7" fill="#1f77b4"/><circle cx="590.8" cy="363.6" r="1.7" fill="#1f77b4"/><circle cx="552.5" cy="381.2" r="1.7" fill="#1f77b4"/><circle cx="529.1" cy="359.8" r="1.7" fill="#1f77b4"/><circle cx="558.8" cy="388.6" r="1.7" fill="#1f77b4"/><circle cx="600.7" cy="360.8" r="1.7" fill="#1f77b4"/><circle cx="566.0" cy="355.6" r="1.7" fill="#1f77b4"/><circle cx="590.3" cy="375.9" r="1.7" fill="#1f77b4"/><circle cx="542.8" cy="353.4" r="1.7" fill="#1f77b4"/><circle cx="575.9" cy="340.0" r="1.7" fill="#1f77b4"/><circle cx="575.3" cy="337.7" r="1.7" fill="#1f77b4"/><circle cx="562.8" cy="357.0" r="1.7" fill="#1f77b4"/><circle cx="568.4" cy="391.8" r="1.7" fill="#1f77b4"/><circle cx="585.1" cy="370.2" r="1.7" fill="#1f77b4"/><circle cx="549.5" cy="356.2" r="1.7" fill="#1f77b4"/><circle cx="591.8" cy="372.6" r="1.7" fill="#1f77b4"/><circle cx="599.1" cy="369.8" r="1.7" fill="#1f77b4"/><circle cx="599.7" cy="354.9" r="1.7" fill="#1f77b4"/><circle cx="593.6" cy="387.0" r="1.7" fill="#1f77b4"/><circle cx="597.0" cy="365.5" r="1.7" fill="#1f77b4"/><circle cx="598.9" cy="377.5" r="1.7" fill="#1f77b4"/><circle cx="588.5" cy="361.0" r="1.7" fill="#1f77b4"/><circle cx="556.1" cy="348.4" r="1.7" fill="#1f77b4"/><circle cx="584.0" cy="364.7" r="1.7" fill="#1f77b4"/><circle cx="584.1" cy="349.5" r="1.7" fill="#1f77b4"/><circle cx="576.1" cy="333.5" r="1.7" fill="#1f77b4"/><circle cx="553.6" cy="359.8" r="1.7" fill="#1f77b4"/><circle cx="532.2" cy="333.2" r="1.7" fill="#1f77b4"/><circle cx="592.5" cy="382.8" r="1.7" fill="#1f77b4"/><circle cx="584.6" cy="404.8" r="1.7" fill="#1f77b4"/><circle cx="601.0" cy="382.1" r="1.7" fill="#1f77b4"/><circle cx="566.1" cy="386.1" r="1.7" fill="#1f77b4"/><circle cx="599.6" cy="373.2" r="1.7" fill="#1f77b4"/><circle cx="564.9" cy="346.4" r="1.7" fill="#1f77b4"/><circle cx="591.0" cy="364.5" r="1.7" fill="#1f77b4"/><circle cx="581.5" cy="372.9" r="1.7" fill="#1f77b4"/><circle cx="523.5" cy="358.9" r="1.7" fill="#1f77b4"/><circle cx="551.1" cy="353.1" r="1.7" fill="#1f77b4"/><circle cx="590.3" cy="375.4" r="1.7" fill="#1f77b4"/><circle cx="578.8" cy="397.3" r="1.7" fill="#1f77b4"/><circle cx="546.9" cy="379.1" r="1.7" fill="#1f77b4"/><circle cx="558.5" cy="356.5" r="1.7" fill="#1f77b4"/><circle cx="567.0" cy="389.7" r="1.7" fill="#1f77b4"/><circle cx="586.9" cy="357.1" r="1.7" fill="#1f77b4"/><circle cx="606.0" cy="369.5" r="1.7" fill="#1f77b4"/><circle cx="595.8" cy="367.0" r="1.7" fill="#1f77b4"/><circle cx="540.4" cy="364.8" r="1.7" fill="#1f77b4"/><circle cx="537.2" cy="355.9" r="1.7" fill="#1f77b4"/><circle cx="553.8" cy="387.1" r="1.7" fill="#1f77b4"/><circle cx="588.0" cy="392.8" r="1.7" fill="#1f77b4"/><circle cx="560.0" cy="344.5" r="1.7" fill="#1f77b4"/><circle cx="551.2" cy="351.0" r="1.7" fill="#1f77b4"/><circle cx="567.2" cy="341.6" r="1.7" fill="#1f77b4"/><circle cx="580.9" cy="376.6" r="1.7" fill="#1f77b4"/><circle cx="584.6" cy="365.8" r="1.7" fill="#1f77b4"/><circle cx="569.0" cy="345.3" r="1.7" fill="#1f77b4"/><circle cx="592.2" cy="347.7" r="1.7" fill="#1f77b4"/><circle cx="571.5" cy="374.8" r="1.7" fill="#1f77b4"/><circle cx="599.4" cy="337.5" r="1.7" fill="#1f77b4"/><circle cx="557.3" cy="369.8" r="1.7" fill="#1f77b4"/><circle cx="532.4" cy="354.9" r="1.7" fill="#1f77b4"/><circle cx="570.3" cy="384.6" r="1.7" fill="#1f77b4"/><circle cx="543.6" cy="384.3" r="1.7" fill="#1f77b4"/><circle cx="549.6" cy="348.6" r="1.7" fill="#1f77b4"/><circle cx="541.2" cy="381.4" r="1.7" fill="#1f77b4"/><circle cx="575.7" cy="337.3" r="1.7" fill="#1f77b4"/><circle cx="580.8" cy="335.2" r="1.7" fill="#1f77b4"/><circle cx="574.3" cy="341.6" r="1.7" fill="#1f77b4"/><circle cx="534.6" cy="342.8" r="1.7" fill="#1f77b4"/><circle cx="557.8" cy="374.4" r="1.7" fill="#1f77b4"/><circle cx="539.5" cy="349.6" r="1.7" fill="#1f77b4"/><circle cx="555.9" cy="339.8" r="1.7" fill="#1f77b4"/><circle cx="544.4" cy="340.1" r="1.7" fill="#1f77b4"/><circle cx="582.1" cy="381.2" r="1.7" fill="#1f77b4"/><circle cx="561.4" cy="397.8" r="1.7" fill="#1f77b4"/><circle cx="592.8" cy="364.2" r="1.7" fill="#1f77b4"/><circle cx="536.8" cy="347.2" r="1.7" fill="#1f77b4"/><circle cx="547.1" cy="360.7" r="1.7" fill="#1f77b4"/><circle cx="549.0" cy="384.2" r="1.7" fill="#1f77b4"/><circle cx="590.3" cy="351.6" r="1.7" fill="#1f77b4"/><circle cx="578.1" cy="351.4" r="1.7" fill="#1f77b4"/><circle cx="547.3" cy="367.3" r="1.7" fill="#1f77b4"/><circle cx="577.0" cy="391.4" r="1.7" fill="#1f77b4"/><circle cx="574.3" cy="344.4" r="1.7" fill="#1f77b4"/><circle cx="522.2" cy="360.7" r="1.7" fill="#1f77b4"/><circle cx="520.7" cy="330.0" r="1.7" fill="#1f77b4"/><circle cx="587.2" cy="335.5" r="1.7" fill="#1f77b4"/><circle cx="569.6" cy="349.0" r="1.7" fill="#1f77b4"/><circle cx="570.3" cy="357.3" r="1.7" fill="#1f77b4"/><circle cx="535.6" cy="344.7" r="1.7" fill="#1f77b4"/><circle cx="566.8" cy="350.6" r="1.7" fill="#1f77b4"/><circle cx="586.7" cy="378.7" r="1.7" fill="#1f77b4"/><circle cx="605.2" cy="356.5" r="1.7" fill="#1f77b4"/><circle cx="588.7" cy="346.8" r="1.7" fill="#1f77b4"/><circle cx="561.1" cy="351.9" r="1.7" fill="#1f77b4"/><circle cx="550.3" cy="373.3" r="1.7" fill="#1f77b4"/><circle cx="554.9" cy="360.8" r="1.7" fill="#1f77b4"/><circle cx="513.8" cy="361.9" r="1.7" fill="#1f77b4"/><circle cx="539.2" cy="358.4" r="1.7" fill="#1f77b4"/><circle cx="522.4" cy="358.3" r="1.7" fill="#1f77b4"/><circle cx="592.4" cy="349.9" r="1.7" fill="#1f77b4"/><circle cx="536.5" cy="366.8" r="1.7" fill="#1f77b4"/><circle cx="562.2" cy="402.0" r="1.7" fill="#1f77b4"/><circle cx="536.2" cy="367.0" r="1.7" fill="#1f77b4"/><circle cx="603.2" cy="375.6" r="1.7" fill="#1f77b4"/><circle cx="585.7" cy="386.7" r="1.7" fill="#1f77b4"/><circle cx="581.7" cy="327.9" r="1.7" fill="#1f77b4"/><circle cx="540.4" cy="363.8" r="1.7" fill="#1f77b4"/><circle cx="578.3" cy="408.3" r="1.7" fill="#1f77b4"/><circle cx="584.9" cy="357.8" r="1.7" fill="#1f77b4"/><circle cx="579.1" cy="373.7" r="1.7" fill="#1f77b4"/><circle cx="582.9" cy="398.9" r="1.7" fill="#1f77b4"/><circle cx="575.4" cy="335.1" r="1.7" fill="#1f77b4"/><circle cx="530.0" cy="366.3" r="1.7" fill="#1f77b4"/><circle cx="579.9" cy="345.7" r="1.7" fill="#1f77b4"/><circle cx="554.0" cy="388.8" r="1.7" fill="#1f77b4"/><circle cx="590.2" cy="346.2" r="1.7" fill="#1f77b4"/><circle cx="551.7" cy="380.4" r="1.7" fill="#1f77b4"/><circle cx="555.4" cy="370.5" r="1.7" fill="#1f77b4"/><circle cx="600.8" cy="341.2" r="1.7" fill="#1f77b4"/><circle cx="578.8" cy="400.8" r="1.7" fill="#1f77b4"/><circle cx="592.3" cy="366.4" r="1.7" fill="#1f77b4"/><circle cx="550.1" cy="359.4" r="1.7" fill="#1f77b4"/><circle cx="565.6" cy="384.6" r="1.7" fill="#1f77b4"/><circle cx="537.3" cy="396.4" r="1.7" fill="#1f77b4"/><circle cx="538.6" cy="380.0" r="1.7" fill="#1f77b4"/><circle cx="589.3" cy="336.9" r="1.7" fill="#1f77b4"/><circle cx="549.6" cy="358.1" r="1.7" fill="#1f77b4"/><circle cx="560.8" cy="372.3" r="1.7" fill="#1f77b4"/><circle cx="543.2" cy="338.0" r="1.7" fill="#1f77b4"/><circle cx="536.7" cy="380.6" r="1.7" fill="#1f77b4"/><circle cx="575.8" cy="336.7" r="1.7" fill="#1f77b4"/><circle cx="582.9" cy="371.3" r="1.7" fill="#1f77b4"/><circle cx="577.1" cy="352.0" r="1.7" fill="#1f77b4"/><circle cx="574.3" cy="399.5" r="1.7" fill="#1f77b4"/><circle cx="563.3" cy="333.5" r="1.7" fill="#1f77b4"/><circle cx="541.8" cy="334.5" r="1.7" fill="#1f77b4"/><circle cx="540.5" cy="356.4" r="1.7" fill="#1f77b4"/><circle cx="601.5" cy="386.9" r="1.7" fill="#1f77b4"/><circle cx="524.4" cy="339.6" r="1.7" fill="#1f77b4"/><circle cx="593.2" cy="363.2" r="1.7" fill="#1f77b4"/><circle cx="594.7" cy="374.9" r="1.7" fill="#1f77b4"/><circle cx="535.5" cy="366.2" r="1.7" fill="#1f77b4"/><circle cx="578.9" cy="391.7" r="1.7" fill="#1f77b4"/><circle cx="595.8" cy="356.7" r="1.7" fill="#1f77b4"/><circle cx="573.6" cy="395.6" r="1.7" fill="#1f77b4"/><circle cx="565.7" cy="388.7" r="1.7" fill="#1f77b4"/><circle cx="565.2" cy="387.8" r="1.7" fill="#1f77b4"/><circle cx="568.6" cy="347.9" r="1.7" fill="#1f77b4"/><circle cx="566.4" cy="406.4" r="1.7" fill="#1f77b4"/><circle cx="564.5" cy="347.6" r="1.7" fill="#1f77b4"/><circle cx="570.1" cy="378.3" r="1.7" fill="#1f77b4"/><circle cx="584.2" cy="368.6" r="1.7" fill="#1f77b4"/><circle cx="584.9" cy="380.6" r="1.7" fill="#1f77b4"/><circle cx="565.1" cy="396.3" r="1.7" fill="#1f77b4"/><circle cx="565.8" cy="389.6" r="1.7" fill="#1f77b4"/><circle cx="567.6" cy="350.4" r="1.7" fill="#1f77b4"/><circle cx="535.1" cy="395.4" r="1.7" fill="#1f77b4"/><circle cx="545.9" cy="361.4" r="1.7" fill="#1f77b4"/><circle cx="562.7" cy="375.0" r="1.7" fill="#1f77b4"/><circle cx="536.0" cy="378.0" r="1.7" fill="#1f77b4"/><circle cx="570.6" cy="349.7" r="1.7" fill="#1f77b4"/><circle cx="580.9" cy="348.4" r="1.7" fill="#1f77b4"/><circle cx="603.0" cy="380.7" r="1.7" fill="#1f77b4"/><circle cx="552.8" cy="397.8" r="1.7" fill="#1f77b4"/><circle cx="556.2" cy="391.8" r="1.7" fill="#1f77b4"/><circle cx="549.3" cy="347.2" r="1.7" fill="#1f77b4"/><circle cx="576.0" cy="383.4" r="1.7" fill="#1f77b4"/><circle cx="591.9" cy="378.7" r="1.7" fill="#1f77b4"/><circle cx="585.3" cy="351.6" r="1.7" fill="#1f77b4"/><circle cx="588.6" cy="413.5" r="1.7" fill="#1f77b4"/><circle cx="580.8" cy="390.3" r="1.7" fill="#1f77b4"/><circle cx="583.2" cy="354.4" r="1.7" fill="#1f77b4"/><circle cx="572.1" cy="347.7" r="1.7" fill="#1f77b4"/><circle cx="557.5" cy="326.2" r="1.7" fill="#1f77b4"/><circle cx="541.7" cy="340.6" r="1.7" fill="#1f77b4"/><circle cx="575.2" cy="375.6" r="1.7" fill="#1f77b4"/><circle cx="617.0" cy="356.1" r="1.7" fill="#1f77b4"/><circle cx="556.9" cy="352.7" r="1.7" fill="#1f77b4"/><circle cx="534.9" cy="371.9" r="1.7" fill="#1f77b4"/><circle cx="579.6" cy="390.3" r="1.7" fill="#1f77b4"/><circle cx="613.9" cy="364.7" r="1.7" fill="#1f77b4"/><circle cx="598.4" cy="364.2" r="1.7" fill="#1f77b4"/><circle cx="522.6" cy="362.9" r="1.7" fill="#1f77b4"/><circle cx="550.1" cy="344.0" r="1.7" fill="#1f77b4"/><circle cx="565.1" cy="347.1" r="1.7" fill="#1f77b4"/><circle cx="555.6" cy="394.7" r="1.7" fill="#1f77b4"/><circle cx="584.6" cy="351.6" r="1.7" fill="#1f77b4"/><circle cx="558.8" cy="385.1" r="1.7" fill="#1f77b4"/><circle cx="550.4" cy="380.1" r="1.7" fill="#1f77b4"/><circle cx="581.8" cy="376.4" r="1.7" fill="#1f77b4"/><circle cx="593.3" cy="385.4" r="1.7" fill="#1f77b4"/><circle cx="593.9" cy="382.7" r="1.7" fill="#1f77b4"/><circle cx="546.4" cy="347.9" r="1.7" fill="#1f77b4"/><circle cx="534.7" cy="370.8" r="1.7" fill="#1f77b4"/><circle cx="566.9" cy="384.2" r="1.7" fill="#1f77b4"/><circle cx="578.0" cy="349.7" r="1.7" fill="#1f77b4"/><circle cx="556.7" cy="379.3" r="1.7" fill="#1f77b4"/><circle cx="570.3" cy="388.3" r="1.7" fill="#1f77b4"/><circle cx="580.5" cy="352.2" r="1.7" fill="#1f77b4"/><circle cx="562.9" cy="355.5" r="1.7" fill="#1f77b4"/><circle cx="584.1" cy="388.8" r="1.7" fill="#1f77b4"/><circle cx="552.6" cy="341.1" r="1.7" fill="#1f77b4"/><circle cx="583.3" cy="340.9" r="1.7" fill="#1f77b4"/><circle cx="563.4" cy="385.8" r="1.7" fill="#1f77b4"/><circle cx="598.2" cy="371.9" r="1.7" fill="#1f77b4"/><circle cx="576.2" cy="395.3" r="1.7" fill="#1f77b4"/><circle cx="536.4" cy="353.3" r="1.7" fill="#1f77b4"/><circle cx="575.0" cy="337.6" r="1.7" fill="#1f77b4"/><circle cx="606.5" cy="357.2" r="1.7" fill="#1f77b4"/><circle cx="555.2" cy="365.1" r="1.7" fill="#1f77b4"/><circle cx="529.7" cy="357.2" r="1.7" fill="#1f77b4"/><circle cx="564.4" cy="397.1" r="1.7" fill="#1f77b4"/><circle cx="532.2" cy="350.5" r="1.7" fill="#1f77b4"/><circle cx="567.9" cy="355.6" r="1.7" fill="#1f77b4"/><circle cx="580.0" cy="376.4" r="1.7" fill="#1f77b4"/><circle cx="554.0" cy="388.6" r="1.7" fill="#1f77b4"/><circle cx="556.8" cy="362.4" r="1.7" fill="#1f77b4"/><circle cx="548.4" cy="356.0" r="1.7" fill="#1f77b4"/><circle cx="557.2" cy="400.5" r="1.7" fill="#1f77b4"/><circle cx="546.4" cy="359.8" r="1.7" fill="#1f77b4"/><circle cx="549.1" cy="355.0" r="1.7" fill="#1f77b4"/><circle cx="557.8" cy="376.4" r="1.7" fill="#1f77b4"/><circle cx="548.5" cy="364.0" r="1.7" fill="#1f77b4"/><circle cx="582.1" cy="342.6" r="1.7" fill="#1f77b4"/><circle cx="590.7" cy="373.6" r="1.7" fill="#1f77b4"/><circle cx="545.6" cy="370.0" r="1.7" fill="#1f77b4"/><circle cx="540.6" cy="366.8" r="1.7" fill="#1f77b4"/><circle cx="555.0" cy="358.5" r="1.7" fill="#1f77b4"/><circle cx="569.2" cy="355.4" r="1.7" fill="#1f77b4"/><circle cx="582.4" cy="351.1" r="1.7" fill="#1f77b4"/><circle cx="556.2" cy="353.2" r="1.7" fill="#1f77b4"/><circle cx="600.9" cy="362.4" r="1.7" fill="#1f77b4"/><circle cx="540.6" cy="352.3" r="1.7" fill="#1f77b4"/><circle cx="570.2" cy="344.3" r="1.7" fill="#1f77b4"/><circle cx="582.3" cy="370.7" r="1.7" fill="#1f77b4"/><circle cx="551.6" cy="354.2" r="1.7" fill="#1f77b4"/><circle cx="583.8" cy="348.5" r="1.7" fill="#1f77b4"/><circle cx="537.3" cy="359.9" r="1.7" fill="#1f77b4"/><circle cx="581.4" cy="368.1" r="1.7" fill="#1f77b4"/><circle cx="573.5" cy="379.2" r="1.7" fill="#1f77b4"/><circle cx="555.8" cy="331.5" r="1.7" fill="#1f77b4"/><circle cx="553.5" cy="349.9" r="1.7" fill="#1f77b4"/><circle cx="563.8" cy="342.8" r="1.7" fill="#1f77b4"/><circle cx="574.6" cy="347.9" r="1.7" fill="#1f77b4"/><circle cx="555.7" cy="316.3" r="1.7" fill="#1f77b4"/><circle cx="542.3" cy="354.5" r="1.7" fill="#1f77b4"/><circle cx="547.2" cy="392.0" r="1.7" fill="#1f77b4"/><circle cx="576.3" cy="361.7" r="1.7" fill="#1f77b4"/><circle cx="604.1" cy="387.8" r="1.7" fill="#1f77b4"/><circle cx="547.9" cy="383.6" r="1.7" fill="#1f77b4"/><circle cx="602.9" cy="375.3" r="1.7" fill="#1f77b4"/><circle cx="580.2" cy="349.6" r="1.7" fill="#1f77b4"/><circle cx="569.7" cy="382.6" r="1.7" fill="#1f77b4"/><circle cx="572.4" cy="385.0" r="1.7" fill="#1f77b4"/><circle cx="591.0" cy="383.0" r="1.7" fill="#1f77b4"/><circle cx="575.9" cy="371.7" r="1.7" fill="#1f77b4"/><circle cx="574.3" cy="376.3" r="1.7" fill="#1f77b4"/><circle cx="564.9" cy="393.7" r="1.7" fill="#1f77b4"/><circle cx="597.7" cy="390.5" r="1.7" fill="#1f77b4"/><circle cx="578.4" cy="352.2" r="1.7" fill="#1f77b4"/><circle cx="588.6" cy="357.4" r="1.7" fill="#1f77b4"/><circle cx="545.8" cy="364.8" r="1.7" fill="#1f77b4"/><circle cx="584.5" cy="384.0" r="1.7" fill="#1f77b4"/><circle cx="523.0" cy="381.3" r="1.7" fill="#1f77b4"/><circle cx="581.2" cy="385.8" r="1.7" fill="#1f77b4"/><circle cx="583.0" cy="357.4" r="1.7" fill="#1f77b4"/><circle cx="543.9" cy="388.4" r="1.7" fill="#1f77b4"/><circle cx="603.7" cy="380.4" r="1.7" fill="#1f77b4"/><circle cx="595.4" cy="368.0" r="1.7" fill="#1f77b4"/><circle cx="580.3" cy="362.3" r="1.7" fill="#1f77b4"/><circle cx="548.3" cy="381.4" r="1.7" fill="#1f77b4"/><circle cx="551.4" cy="362.8" r="1.7" fill="#1f77b4"/><circle cx="572.2" cy="404.9" r="1.7" fill="#1f77b4"/><circle cx="538.8" cy="373.8" r="1.7" fill="#1f77b4"/><circle cx="556.5" cy="332.4" r="1.7" fill="#1f77b4"/><circle cx="562.2" cy="336.8" r="1.7" fill="#1f77b4"/><circle cx="583.1" cy="367.4" r="1.7" fill="#1f77b4"/><circle cx="560.0" cy="352.1" r="1.7" fill="#1f77b4"/><circle cx="557.2" cy="370.1" r="1.7" fill="#1f77b4"/><circle cx="608.0" cy="397.8" r="1.7" fill="#1f77b4"/><circle cx="578.3" cy="361.6" r="1.7" fill="#1f77b4"/><circle cx="589.5" cy="376.2" r="1.7" fill="#1f77b4"/><circle cx="551.4" cy="385.9" r="1.7" fill="#1f77b4"/><circle cx="542.5" cy="384.4" r="1.7" fill="#1f77b4"/><circle cx="553.2" cy="373.3" r="1.7" fill="#1f77b4"/><circle cx="543.9" cy="359.5" r="1.7" fill="#1f77b4"/><circle cx="582.4" cy="354.4" r="1.7" fill="#1f77b4"/><circle cx="590.3" cy="377.9" r="1.7" fill="#1f77b4"/><circle cx="546.6" cy="345.7" r="1.7" fill="#1f77b4"/><circle cx="564.7" cy="333.7" r="1.7" fill="#1f77b4"/><circle cx="558.0" cy="361.0" r="1.7" fill="#1f77b4"/><circle cx="586.4" cy="372.9" r="1.7" fill="#1f77b4"/><circle cx="616.4" cy="353.7" r="1.7" fill="#1f77b4"/><circle cx="602.1" cy="383.0" r="1.7" fill="#1f77b4"/><circle cx="606.1" cy="361.8" r="1.7" fill="#1f77b4"/><circle cx="582.0" cy="366.7" r="1.7" fill="#1f77b4"/><circle cx="535.9" cy="348.1" r="1.7" fill="#1f77b4"/><circle cx="589.0" cy="336.5" r="1.7" fill="#1f77b4"/><circle cx="551.1" cy="396.3" r="1.7" fill="#1f77b4"/><circle cx="598.3" cy="395.7" r="1.7" fill="#1f77b4"/><circle cx="612.1" cy="360.4" r="1.7" fill="#1f77b4"/><circle cx="576.1" cy="344.2" r="1.7" fill="#1f77b4"/><circle cx="553.7" cy="414.5" r="1.7" fill="#1f77b4"/><circle cx="540.8" cy="389.2" r="1.7" fill="#1f77b4"/><circle cx="554.0" cy="362.2" r="1.7" fill="#1f77b4"/><circle cx="559.5" cy="395.0" r="1.7" fill="#1f77b4"/><circle cx="544.1" cy="393.0" r="1.7" fill="#1f77b4"/><circle cx="562.8" cy="390.3" r="1.7" fill="#1f77b4"/><circle cx="580.9" cy="380.6" r="1.7" fill="#1f77b4"/><circle cx="546.2" cy="374.3" r="1.7" fill="#1f77b4"/><circle cx="554.6" cy="386.7" r="1.7" fill="#1f77b4"/><circle cx="543.0" cy="392.2" r="1.7" fill="#1f77b4"/><circle cx="530.2" cy="346.5" r="1.7" fill="#1f77b4"/><circle cx="569.1" cy="375.9" r="1.7" fill="#1f77b4"/><circle cx="556.2" cy="331.2" r="1.7" fill="#1f77b4"/><circle cx="591.5" cy="407.5" r="1.7" fill="#1f77b4"/><circle cx="537.1" cy="385.7" r="1.7" fill="#1f77b4"/><circle cx="549.7" cy="325.9" r="1.7" fill="#1f77b4"/><circle cx="584.5" cy="378.8" r="1.7" fill="#1f77b4"/><circle cx="578.3" cy="373.2" r="1.7" fill="#1f77b4"/><circle cx="558.6" cy="331.6" r="1.7" fill="#1f77b4"/><circle cx="536.6" cy="381.3" r="1.7" fill="#1f77b4"/><circle cx="586.7" cy="380.6" r="1.7" fill="#1f77b4"/><circle cx="597.5" cy="395.8" r="1.7" fill="#1f77b4"/><circle cx="561.7" cy="336.7" r="1.7" fill="#1f77b4"/><circle cx="599.1" cy="382.7" r="1.7" fill="#1f77b4"/><circle cx="575.8" cy="360.1" r="1.7" fill="#1f77b4"/><circle cx="566.5" cy="372.6" r="1.7" fill="#1f77b4"/><circle cx="568.5" cy="347.0" r="1.7" fill="#1f77b4"/><circle cx="570.2" cy="353.0" r="1.7" fill="#1f77b4"/><circle cx="566.6" cy="379.8" r="1.7" fill="#1f77b4"/><circle cx="576.8" cy="390.0" r="1.7" fill="#1f77b4"/><circle cx="568.1" cy="351.6" r="1.7" fill="#1f77b4"/><circle cx="547.3" cy="362.5" r="1.7" fill="#1f77b4"/><circle cx="572.3" cy="352.0" r="1.7" fill="#1f77b4"/><circle cx="547.6" cy="345.3" r="1.7" fill="#1f77b4"/><circle cx="539.6" cy="348.0" r="1.7" fill="#1f77b4"/><circle cx="523.0" cy="325.4" r="1.7" fill="#1f77b4"/><circle cx="549.1" cy="382.3" r="1.7" fill="#1f77b4"/><circle cx="550.8" cy="344.2" r="1.7" fill="#1f77b4"/><circle cx="586.7" cy="362.7" r="1.7" fill="#1f77b4"/><circle cx="508.2" cy="360.5" r="1.7" fill="#1f77b4"/><circle cx="564.0" cy="335.1" r="1.7" fill="#1f77b4"/><circle cx="569.6" cy="390.6" r="1.7" fill="#1f77b4"/><circle cx="581.5" cy="368.2" r="1.7" fill="#1f77b4"/><circle cx="577.6" cy="343.4" r="1.7" fill="#1f77b4"/><circle cx="594.5" cy="356.7" r="1.7" fill="#1f77b4"/><circle cx="578.3" cy="371.8" r="1.7" fill="#1f77b4"/><circle cx="524.7" cy="336.8" r="1.7" fill="#1f77b4"/><circle cx="523.9" cy="381.5" r="1.7" fill="#1f77b4"/><circle cx="609.9" cy="376.0" r="1.7" fill="#1f77b4"/><circle cx="577.9" cy="348.8" r="1.7" fill="#1f77b4"/><circle cx="583.6" cy="365.8" r="1.7" fill="#1f77b4"/><circle cx="550.3" cy="345.5" r="1.7" fill="#1f77b4"/><circle cx="590.8" cy="380.0" r="1.7" fill="#1f77b4"/><circle cx="559.4" cy="389.6" r="1.7" fill="#1f77b4"/><circle cx="590.1" cy="367.0" r="1.7" fill="#1f77b4"/><circle cx="596.3" cy="375.8" r="1.7" fill="#1f77b4"/><circle cx="557.8" cy="340.5" r="1.7" fill="#1f77b4"/><circle cx="561.4" cy="355.9" r="1.7" fill="#1f77b4"/><circle cx="578.3" cy="354.5" r="1.7" fill="#1f77b4"/><circle cx="578.9" cy="350.9" r="1.7" fill="#1f77b4"/><circle cx="593.7" cy="363.1" r="1.7" fill="#1f77b4"/><circle cx="577.5" cy="311.8" r="1.7" fill="#1f77b4"/><circle cx="579.6" cy="378.1" r="1.7" fill="#1f77b4"/><circle cx="591.9" cy="349.0" r="1.7" fill="#1f77b4"/><circle cx="578.9" cy="382.1" r="1.7" fill="#1f77b4"/><circle cx="574.6" cy="379.8" r="1.7" fill="#1f77b4"/><circle cx="554.0" cy="376.7" r="1.7" fill="#1f77b4"/><circle cx="514.5" cy="381.3" r="1.7" fill="#1f77b4"/><circle cx="588.8" cy="386.2" r="1.7" fill="#1f77b4"/><circle cx="563.1" cy="342.4" r="1.7" fill="#1f77b4"/><circle cx="547.5" cy="335.9" r="1.7" fill="#1f77b4"/><circle cx="593.3" cy="381.8" r="1.7" fill="#1f77b4"/><circle cx="603.5" cy="369.5" r="1.7" fill="#1f77b4"/><circle cx="578.0" cy="323.2" r="1.7" fill="#1f77b4"/><circle cx="558.7" cy="334.8" r="1.7" fill="#1f77b4"/><circle cx="592.6" cy="366.4" r="1.7" fill="#1f77b4"/><circle cx="596.5" cy="378.8" r="1.7" fill="#1f77b4"/><circle cx="598.1" cy="354.3" r="1.7" fill="#1f77b4"/><circle cx="557.9" cy="337.6" r="1.7" fill="#1f77b4"/><circle cx="551.1" cy="343.5" r="1.7" fill="#1f77b4"/><circle cx="592.7" cy="364.7" r="1.7" fill="#1f77b4"/><circle cx="536.2" cy="353.3" r="1.7" fill="#1f77b4"/><circle cx="569.5" cy="351.7" r="1.7" fill="#1f77b4"/><circle cx="569.2" cy="384.0" r="1.7" fill="#1f77b4"/><circle cx="574.4" cy="344.6" r="1.7" fill="#1f77b4"/><circle cx="535.9" cy="364.2" r="1.7" fill="#1f77b4"/><circle cx="574.3" cy="340.2" r="1.7" fill="#1f77b4"/><circle cx="554.6" cy="371.2" r="1.7" fill="#1f77b4"/><circle cx="580.8" cy="359.4" r="1.7" fill="#1f77b4"/><circle cx="590.3" cy="357.3" r="1.7" fill="#1f77b4"/><circle cx="558.5" cy="353.0" r="1.7" fill="#1f77b4"/><circle cx="604.5" cy="361.7" r="1.7" fill="#1f77b4"/><circle cx="558.0" cy="363.9" r="1.7" fill="#1f77b4"/><circle cx="582.4" cy="390.4" r="1.7" fill="#1f77b4"/><circle cx="577.0" cy="349.3" r="1.7" fill="#1f77b4"/><circle cx="519.0" cy="349.9" r="1.7" fill="#1f77b4"/><circle cx="593.3" cy="342.1" r="1.7" fill="#1f77b4"/><circle cx="556.9" cy="347.0" r="1.7" fill="#1f77b4"/><circle cx="566.6" cy="380.5" r="1.7" fill="#1f77b4"/><circle cx="519.8" cy="363.7" r="1.7" fill="#1f77b4"/><circle cx="532.4" cy="371.0" r="1.7" fill="#1f77b4"/><circle cx="570.5" cy="343.4" r="1.7" fill="#1f77b4"/><circle cx="587.3" cy="350.9" r="1.7" fill="#1f77b4"/><circle cx="553.8" cy="399.4" r="1.7" fill="#1f77b4"/><circle cx="612.5" cy="360.4" r="1.7" fill="#1f77b4"/><circle cx="562.0" cy="378.0" r="1.7" fill="#1f77b4"/><circle cx="579.0" cy="377.1" r="1.7" fill="#1f77b4"/><circle cx="540.6" cy="364.1" r="1.7" fill="#1f77b4"/><circle cx="562.2" cy="344.4" r="1.7" fill="#1f77b4"/><circle cx="537.6" cy="381.9" r="1.7" fill="#1f77b4"/><circle cx="587.0" cy="340.5" r="1.7" fill="#1f77b4"/><circle cx="571.3" cy="373.5" r="1.7" fill="#1f77b4"/><circle cx="552.2" cy="354.2" r="1.7" fill="#1f77b4"/><circle cx="559.7" cy="360.4" r="1.7" fill="#1f77b4"/><circle cx="572.6" cy="397.3" r="1.7" fill="#1f77b4"/><circle cx="546.0" cy="357.1" r="1.7" fill="#1f77b4"/><circle cx="577.6" cy="393.2" r="1.7" fill="#1f77b4"/><circle cx="607.4" cy="352.1" r="1.7" fill="#1f77b4"/><circle cx="582.2" cy="368.9" r="1.7" fill="#1f77b4"/><circle cx="543.6" cy="387.7" r="1.7" fill="#1f77b4"/><circle cx="543.6" cy="369.1" r="1.7" fill="#1f77b4"/><circle cx="603.1" cy="360.7" r="1.7" fill="#1f77b4"/><circle cx="597.3" cy="370.4" r="1.7" fill="#1f77b4"/><circle cx="577.7" cy="390.8" r="1.7" fill="#1f77b4"/><circle cx="585.4" cy="361.3" r="1.7" fill="#1f77b4"/><circle cx="563.4" cy="346.1" r="1.7" fill="#1f77b4"/><circle cx="584.2" cy="373.2" r="1.7" fill="#1f77b4"/><circle cx="547.6" cy="357.5" r="1.7" fill="#1f77b4"/><circle cx="561.6" cy="346.7" r="1.7" fill="#1f77b4"/><circle cx="548.9" cy="375.7" r="1.7" fill="#1f77b4"/><circle cx="525.5" cy="368.2" r="1.7" fill="#1f77b4"/><circle cx="581.5" cy="346.9" r="1.7" fill="#1f77b4"/><circle cx="592.6" cy="339.6" r="1.7" fill="#1f77b4"/><circle cx="567.5" cy="343.8" r="1.7" fill="#1f77b4"/><circle cx="531.0" cy="374.6" r="1.7" fill="#1f77b4"/><circle cx="546.3" cy="390.1" r="1.7" fill="#1f77b4"/><circle cx="563.0" cy="377.3" r="1.7" fill="#1f77b4"/><circle cx="553.3" cy="362.7" r="1.7" fill="#1f77b4"/><circle cx="567.9" cy="338.2" r="1.7" fill="#1f77b4"/><circle cx="541.7" cy="378.3" r="1.7" fill="#1f77b4"/><circle cx="596.4" cy="396.9" r="1.7" fill="#1f77b4"/><circle cx="560.5" cy="340.9" r="1.7" fill="#1f77b4"/><circle cx="555.1" cy="330.3" r="1.7" fill="#1f77b4"/><circle cx="511.8" cy="345.5" r="1.7" fill="#1f77b4"/><circle cx="522.6" cy="349.4" r="1.7" fill="#1f77b4"/><circle cx="591.7" cy="371.0" r="1.7" fill="#1f77b4"/><circle cx="578.5" cy="349.1" r="1.7" fill="#1f77b4"/><circle cx="550.6" cy="377.8" r="1.7" fill="#1f77b4"/><circle cx="581.6" cy="393.5" r="1.7" fill="#1f77b4"/><circle cx="567.0" cy="373.1" r="1.7" fill="#1f77b4"/><circle cx="571.8" cy="386.6" r="1.7" fill="#1f77b4"/><circle cx="580.5" cy="378.3" r="1.7" fill="#1f77b4"/><circle cx="559.4" cy="368.8" r="1.7" fill="#1f77b4"/><circle cx="569.7" cy="378.6" r="1.7" fill="#1f77b4"/><circle cx="545.5" cy="380.1" r="1.7" fill="#1f77b4"/><circle cx="563.4" cy="381.0" r="1.7" fill="#1f77b4"/><circle cx="539.7" cy="345.3" r="1.7" fill="#1f77b4"/><circle cx="570.3" cy="379.5" r="1.7" fill="#1f77b4"/><circle cx="543.6" cy="365.0" r="1.7" fill="#1f77b4"/><circle cx="578.8" cy="350.7" r="1.7" fill="#1f77b4"/><circle cx="541.3" cy="377.8" r="1.7" fill="#1f77b4"/><circle cx="592.5" cy="400.3" r="1.7" fill="#1f77b4"/><circle cx="604.4" cy="374.1" r="1.7" fill="#1f77b4"/><circle cx="596.1" cy="363.2" r="1.7" fill="#1f77b4"/><circle cx="515.0" cy="364.3" r="1.7" fill="#1f77b4"/><circle cx="609.2" cy="365.4" r="1.7" fill="#1f77b4"/><circle cx="548.9" cy="366.7" r="1.7" fill="#1f77b4"/><circle cx="548.0" cy="376.3" r="1.7" fill="#1f77b4"/><circle cx="582.3" cy="369.9" r="1.7" fill="#1f77b4"/><circle cx="551.9" cy="351.8" r="1.7" fill="#1f77b4"/><circle cx="552.8" cy="370.0" r="1.7" fill="#1f77b4"/><circle cx="547.5" cy="358.3" r="1.7" fill="#1f77b4"/><circle cx="583.1" cy="365.4" r="1.7" fill="#1f77b4"/><circle cx="575.7" cy="349.8" r="1.7" fill="#1f77b4"/><circle cx="603.6" cy="369.6" r="1.7" fill="#1f77b4"/><circle cx="592.0" cy="383.0" r="1.7" fill="#1f77b4"/><circle cx="572.9" cy="377.3" r="1.7" fill="#1f77b4"/><circle cx="593.6" cy="328.4" r="1.7" fill="#1f77b4"/><circle cx="541.4" cy="366.7" r="1.7" fill="#1f77b4"/><circle cx="553.1" cy="377.9" r="1.7" fill="#1f77b4"/><circle cx="550.6" cy="346.2" r="1.7" fill="#1f77b4"/><circle cx="577.7" cy="406.8" r="1.7" fill="#1f77b4"/><circle cx="557.0" cy="386.8" r="1.7" fill="#1f77b4"/><circle cx="535.9" cy="381.6" r="1.7" fill="#1f77b4"/><circle cx="575.3" cy="342.3" r="1.7" fill="#1f77b4"/><circle cx="558.7" cy="374.3" r="1.7" fill="#1f77b4"/><circle cx="593.2" cy="365.5" r="1.7" fill="#1f77b4"/><circle cx="575.7" cy="352.5" r="1.7" fill="#1f77b4"/><circle cx="583.4" cy="353.0" r="1.7" fill="#1f77b4"/><circle cx="580.6" cy="390.7" r="1.7" fill="#1f77b4"/><circle cx="577.1" cy="390.7" r="1.7" fill="#1f77b4"/><circle cx="554.1" cy="342.3" r="1.7" fill="#1f77b4"/><circle cx="550.0" cy="345.6" r="1.7" fill="#1f77b4"/><circle cx="591.7" cy="380.7" r="1.7" fill="#1f77b4"/><circle cx="546.7" cy="340.2" r="1.7" fill="#1f77b4"/><circle cx="515.0" cy="391.5" r="1.7" fill="#1f77b4"/><circle cx="538.8" cy="355.1" r="1.7" fill="#1f77b4"/><circle cx="603.3" cy="407.9" r="1.7" fill="#1f77b4"/><circle cx="583.3" cy="376.2" r="1.7" fill="#1f77b4"/><circle cx="595.7" cy="371.8" r="1.7" fill="#1f77b4"/><circle cx="583.7" cy="370.1" r="1.7" fill="#1f77b4"/><circle cx="571.3" cy="341.1" r="1.7" fill="#1f77b4"/><circle cx="592.8" cy="388.6" r="1.7" fill="#1f77b4"/><circle cx="559.4" cy="357.1" r="1.7" fill="#1f77b4"/><circle cx="594.4" cy="369.6" r="1.7" fill="#1f77b4"/><circle cx="544.0" cy="369.4" r="1.7" fill="#1f77b4"/><circle cx="533.8" cy="344.5" r="1.7" fill="#1f77b4"/><circle cx="547.7" cy="342.2" r="1.7" fill="#1f77b4"/><circle cx="576.8" cy="340.9" r="1.7" fill="#1f77b4"/><circle cx="537.2" cy="324.4" r="1.7" fill="#1f77b4"/><circle cx="557.1" cy="394.7" r="1.7" fill="#1f77b4"/><circle cx="589.8" cy="343.2" r="1.7" fill="#1f77b4"/><circle cx="582.6" cy="389.1" r="1.7" fill="#1f77b4"/><circle cx="561.5" cy="390.4" r="1.7" fill="#1f77b4"/><circle cx="586.3" cy="369.8" r="1.7" fill="#1f77b4"/><circle cx="571.2" cy="335.3" r="1.7" fill="#1f77b4"/><circle cx="601.8" cy="330.7" r="1.7" fill="#1f77b4"/><circle cx="545.8" cy="376.4" r="1.7" fill="#1f77b4"/><circle cx="566.9" cy="348.4" r="1.7" fill="#1f77b4"/><circle cx="581.4" cy="352.0" r="1.7" fill="#1f77b4"/><circle cx="545.4" cy="370.2" r="1.7" fill="#1f77b4"/><circle cx="553.2" cy="383.2" r="1.7" fill="#1f77b4"/><circle cx="549.8" cy="327.6" r="1.7" fill="#1f77b4"/><circle cx="580.1" cy="381.7" r="1.7" fill="#1f77b4"/><circle cx="551.1" cy="387.6" r="1.7" fill="#1f77b4"/><circle cx="529.3" cy="365.1" r="1.7" fill="#1f77b4"/><circle cx="598.7" cy="352.3" r="1.7" fill="#1f77b4"/><circle cx="561.6" cy="385.8" r="1.7" fill="#1f77b4"/><circle cx="538.8" cy="347.7" r="1.7" fill="#1f77b4"/><circle cx="593.6" cy="394.0" r="1.7" fill="#1f77b4"/><circle cx="563.7" cy="350.4" r="1.7" fill="#1f77b4"/><circle cx="541.2" cy="334.3" r="1.7" fill="#1f77b4"/><circle cx="550.5" cy="387.4" r="1.7" fill="#1f77b4"/><circle cx="552.1" cy="347.7" r="1.7" fill="#1f77b4"/><circle cx="574.3" cy="349.6" r="1.7" fill="#1f77b4"/><circle cx="556.2" cy="403.8" r="1.7" fill="#1f77b4"/><circle cx="586.9" cy="335.3" r="1.7" fill="#1f77b4"/><circle cx="595.0" cy="358.6" r="1.7" fill="#1f77b4"/><circle cx="543.8" cy="389.2" r="1.7" fill="#1f77b4"/><circle cx="559.1" cy="396.1" r="1.7" fill="#1f77b4"/><circle cx="525.1" cy="348.9" r="1.7" fill="#1f77b4"/><circle cx="576.1" cy="416.4" r="1.7" fill="#1f77b4"/><circle cx="583.3" cy="360.8" r="1.7" fill="#1f77b4"/><circle cx="600.0" cy="339.7" r="1.7" fill="#1f77b4"/><circle cx="570.2" cy="352.1" r="1.7" fill="#1f77b4"/><circle cx="552.2" cy="400.5" r="1.7" fill="#1f77b4"/><circle cx="566.2" cy="380.7" r="1.7" fill="#1f77b4"/><circle cx="595.4" cy="374.2" r="1.7" fill="#1f77b4"/><circle cx="583.5" cy="372.2" r="1.7" fill="#1f77b4"/><circle cx="552.5" cy="378.1" r="1.7" fill="#1f77b4"/><circle cx="576.0" cy="362.0" r="1.7" fill="#1f77b4"/><circle cx="587.1" cy="374.0" r="1.7" fill="#1f77b4"/><circle cx="567.7" cy="379.2" r="1.7" fill="#1f77b4"/><circle cx="563.5" cy="326.8" r="1.7" fill="#1f77b4"/><circle cx="597.0" cy="370.4" r="1.7" fill="#1f77b4"/><circle cx="583.0" cy="359.2" r="1.7" fill="#1f77b4"/><circle cx="552.6" cy="357.3" r="1.7" fill="#1f77b4"/><circle cx="558.6" cy="390.4" r="1.7" fill="#1f77b4"/><circle cx="569.2" cy="333.3" r="1.7" fill="#1f77b4"/><circle cx="591.5" cy="374.6" r="1.7" fill="#1f77b4"/><circle cx="554.4" cy="331.2" r="1.7" fill="#1f77b4"/><circle cx="550.9" cy="340.9" r="1.7" fill="#1f77b4"/><circle cx="544.9" cy="371.1" r="1.7" fill="#1f77b4"/><circle cx="544.5" cy="379.1" r="1.7" fill="#1f77b4"/><circle cx="568.5" cy="382.9" r="1.7" fill="#1f77b4"/><circle cx="547.9" cy="344.9" r="1.7" fill="#1f77b4"/><circle cx="586.8" cy="357.7" r="1.7" fill="#1f77b4"/><circle cx="542.7" cy="357.8" r="1.7" fill="#1f77b4"/><circle cx="551.4" cy="338.1" r="1.7" fill="#1f77b4"/><circle cx="581.3" cy="358.5" r="1.7" fill="#1f77b4"/><circle cx="566.6" cy="420.6" r="1.7" fill="#1f77b4"/><circle cx="528.5" cy="379.5" r="1.7" fill="#1f77b4"/><circle cx="531.4" cy="362.8" r="1.7" fill="#1f77b4"/><circle cx="586.6" cy="364.1" r="1.7" fill="#1f77b4"/><circle cx="548.4" cy="385.8" r="1.7" fill="#1f77b4"/><circle cx="566.4" cy="356.9" r="1.7" fill="#1f77b4"/><circle cx="571.9" cy="359.2" r="1.7" fill="#1f77b4"/><circle cx="553.6" cy="326.4" r="1.7" fill="#1f77b4"/><circle cx="547.3" cy="385.4" r="1.7" fill="#1f77b4"/><circle cx="575.2" cy="400.5" r="1.7" fill="#1f77b4"/><circle cx="557.8" cy="350.1" r="1.7" fill="#1f77b4"/><circle cx="543.1" cy="342.2" r="1.7" fill="#1f77b4"/><circle cx="535.9" cy="335.4" r="1.7" fill="#1f77b4"/><circle cx="530.8" cy="398.5" r="1.7" fill="#1f77b4"/><circle cx="561.1" cy="382.0" r="1.7" fill="#1f77b4"/><circle cx="518.6" cy="364.9" r="1.7" fill="#1f77b4"/><circle cx="562.8" cy="354.7" r="1.7" fill="#1f77b4"/><circle cx="578.2" cy="347.5" r="1.7" fill="#1f77b4"/><circle cx="590.4" cy="369.2" r="1.7" fill="#1f77b4"/><circle cx="577.1" cy="340.6" r="1.7" fill="#1f77b4"/><circle cx="594.6" cy="364.6" r="1.7" fill="#1f77b4"/><circle cx="532.6" cy="349.6" r="1.7" fill="#1f77b4"/><circle cx="561.9" cy="371.7" r="1.7" fill="#1f77b4"/><circle cx="552.3" cy="359.8" r="1.7" fill="#1f77b4"/><circle cx="578.2" cy="385.4" r="1.7" fill="#1f77b4"/><circle cx="536.7" cy="355.0" r="1.7" fill="#1f77b4"/><circle cx="553.3" cy="348.2" r="1.7" fill="#1f77b4"/><circle cx="539.3" cy="358.8" r="1.7" fill="#1f77b4"/><circle cx="592.3" cy="380.1" r="1.7" fill="#1f77b4"/><circle cx="533.1" cy="393.2" r="1.7" fill="#1f77b4"/><circle cx="524.6" cy="395.9" r="1.7" fill="#1f77b4"/><circle cx="544.2" cy="362.6" r="1.7" fill="#1f77b4"/><circle cx="554.3" cy="330.8" r="1.7" fill="#1f77b4"/><circle cx="548.1" cy="399.4" r="1.7" fill="#1f77b4"/><circle cx="605.3" cy="344.3" r="1.7" fill="#1f77b4"/><circle cx="548.3" cy="355.5" r="1.7" fill="#1f77b4"/><circle cx="550.2" cy="371.4" r="1.7" fill="#1f77b4"/><circle cx="583.7" cy="377.8" r="1.7" fill="#1f77b4"/><circle cx="589.1" cy="347.7" r="1.7" fill="#1f77b4"/><circle cx="535.2" cy="370.5" r="1.7" fill="#1f77b4"/><circle cx="546.3" cy="363.8" r="1.7" fill="#1f77b4"/><circle cx="581.1" cy="353.7" r="1.7" fill="#1f77b4"/><circle cx="546.1" cy="376.4" r="1.7" fill="#1f77b4"/><circle cx="598.2" cy="398.0" r="1.7" fill="#1f77b4"/><circle cx="559.5" cy="393.0" r="1.7" fill="#1f77b4"/><circle cx="561.7" cy="388.7" r="1.7" fill="#1f77b4"/><circle cx="576.7" cy="381.8" r="1.7" fill="#1f77b4"/><circle cx="546.7" cy="372.5" r="1.7" fill="#1f77b4"/><circle cx="586.5" cy="344.1" r="1.7" fill="#1f77b4"/><circle cx="547.6" cy="347.5" r="1.7" fill="#1f77b4"/><circle cx="578.4" cy="319.3" r="1.7" fill="#1f77b4"/><circle cx="582.8" cy="377.4" r="1.7" fill="#1f77b4"/><circle cx="596.0" cy="392.6" r="1.7" fill="#1f77b4"/><circle cx="565.9" cy="382.3" r="1.7" fill="#1f77b4"/><circle cx="568.0" cy="380.5" r="1.7" fill="#1f77b4"/><circle cx="553.9" cy="353.4" r="1.7" fill="#1f77b4"/><circle cx="574.4" cy="367.4" r="1.7" fill="#1f77b4"/><circle cx="587.5" cy="351.3" r="1.7" fill="#1f77b4"/><circle cx="574.1" cy="384.9" r="1.7" fill="#1f77b4"/><circle cx="565.2" cy="324.5" r="1.7" fill="#1f77b4"/><circle cx="526.4" cy="352.5" r="1.7" fill="#1f77b4"/><circle cx="600.2" cy="361.0" r="1.7" fill="#1f77b4"/><circle cx="571.0" cy="377.4" r="1.7" fill="#1f77b4"/><circle cx="554.2" cy="391.5" r="1.7" fill="#1f77b4"/><circle cx="590.6" cy="337.4" r="1.7" fill="#1f77b4"/><circle cx="579.3" cy="395.3" r="1.7" fill="#1f77b4"/><circle cx="583.5" cy="363.7" r="1.7" fill="#1f77b4"/><circle cx="582.6" cy="379.9" r="1.7" fill="#1f77b4"/><circle cx="597.4" cy="358.7" r="1.7" fill="#1f77b4"/><circle cx="539.4" cy="345.5" r="1.7" fill="#1f77b4"/><circle cx="590.8" cy="331.4" r="1.7" fill="#1f77b4"/><circle cx="541.5" cy="383.8" r="1.7" fill="#1f77b4"/><circle cx="576.1" cy="324.7" r="1.7" fill="#1f77b4"/><circle cx="539.5" cy="336.1" r="1.7" fill="#1f77b4"/><circle cx="550.8" cy="372.4" r="1.7" fill="#1f77b4"/><circle cx="540.5" cy="324.7" r="1.7" fill="#1f77b4"/><circle cx="615.2" cy="368.8" r="1.7" fill="#1f77b4"/><circle cx="561.9" cy="336.2" r="1.7" fill="#1f77b4"/><circle cx="538.3" cy="365.0" r="1.7" fill="#1f77b4"/><circle cx="591.0" cy="371.1" r="1.7" fill="#1f77b4"/><circle cx="606.0" cy="357.3" r="1.7" fill="#1f77b4"/><circle cx="567.9" cy="373.4" r="1.7" fill="#1f77b4"/><circle cx="553.4" cy="378.3" r="1.7" fill="#1f77b4"/><circle cx="581.0" cy="378.5" r="1.7" fill="#1f77b4"/><circle cx="552.6" cy="392.1" r="1.7" fill="#1f77b4"/><circle cx="546.0" cy="366.1" r="1.7" fill="#1f77b4"/><circle cx="540.7" cy="333.3" r="1.7" fill="#1f77b4"/><circle cx="546.1" cy="327.9" r="1.7" fill="#1f77b4"/><circle cx="543.5" cy="362.6" r="1.7" fill="#1f77b4"/><circle cx="554.1" cy="349.6" r="1.7" fill="#1f77b4"/><circle cx="598.9" cy="363.7" r="1.7" fill="#1f77b4"/><circle cx="535.0" cy="378.1" r="1.7" fill="#1f77b4"/><circle cx="575.2" cy="350.9" r="1.7" fill="#1f77b4"/><circle cx="561.4" cy="396.0" r="1.7" fill="#1f77b4"/><circle cx="594.4" cy="375.4" r="1.7" fill="#1f77b4"/><circle cx="578.3" cy="359.2" r="1.7" fill="#1f77b4"/><circle cx="525.4" cy="385.5" r="1.7" fill="#1f77b4"/><circle cx="533.5" cy="350.7" r="1.7" fill="#1f77b4"/><circle cx="589.9" cy="355.5" r="1.7" fill="#1f77b4"/><circle cx="578.0" cy="363.5" r="1.7" fill="#1f77b4"/><circle cx="563.2" cy="339.3" r="1.7" fill="#1f77b4"/><circle cx="574.0" cy="344.1" r="1.7" fill="#1f77b4"/><circle cx="579.1" cy="378.1" r="1.7" fill="#1f77b4"/><circle cx="588.2" cy="369.6" r="1.7" fill="#1f77b4"/><circle cx="584.8" cy="356.1" r="1.7" fill="#1f77b4"/><circle cx="589.0" cy="341.5" r="1.7" fill="#1f77b4"/><circle cx="574.0" cy="371.7" r="1.7" fill="#1f77b4"/><circle cx="561.4" cy="356.2" r="1.7" fill="#1f77b4"/><circle cx="551.8" cy="356.1" r="1.7" fill="#1f77b4"/><circle cx="612.4" cy="352.9" r="1.7" fill="#1f77b4"/><circle cx="557.5" cy="351.3" r="1.7" fill="#1f77b4"/><circle cx="554.7" cy="362.6" r="1.7" fill="#1f77b4"/><circle cx="511.2" cy="386.2" r="1.7" fill="#1f77b4"/><circle cx="561.6" cy="391.8" r="1.7" fill="#1f77b4"/><circle cx="588.3" cy="351.9" r="1.7" fill="#1f77b4"/><circle cx="591.7" cy="350.7" r="1.7" fill="#1f77b4"/><circle cx="538.6" cy="351.9" r="1.7" fill="#1f77b4"/><circle cx="559.5" cy="374.5" r="1.7" fill="#1f77b4"/><circle cx="555.2" cy="346.9" r="1.7" fill="#1f77b4"/><circle cx="568.7" cy="388.4" r="1.7" fill="#1f77b4"/><circle cx="559.8" cy="349.7" r="1.7" fill="#1f77b4"/><circle cx="561.0" cy="337.8" r="1.7" fill="#1f77b4"/><circle cx="576.5" cy="355.2" r="1.7" fill="#1f77b4"/><circle cx="572.3" cy="399.5" r="1.7" fill="#1f77b4"/><circle cx="593.6" cy="366.6" r="1.7" fill="#1f77b4"/><circle cx="595.0" cy="360.5" r="1.7" fill="#1f77b4"/><circle cx="607.7" cy="350.3" r="1.7" fill="#1f77b4"/><circle cx="578.4" cy="369.3" r="1.7" fill="#1f77b4"/><circle cx="582.1" cy="345.9" r="1.7" fill="#1f77b4"/><circle cx="584.5" cy="338.8" r="1.7" fill="#1f77b4"/><circle cx="569.1" cy="314.2" r="1.7" fill="#1f77b4"/><circle cx="544.7" cy="335.9" r="1.7" fill="#1f77b4"/><circle cx="542.1" cy="359.4" r="1.7" fill="#1f77b4"/><circle cx="564.8" cy="379.5" r="1.7" fill="#1f77b4"/><circle cx="522.9" cy="337.2" r="1.7" fill="#1f77b4"/><circle cx="542.0" cy="351.0" r="1.7" fill="#1f77b4"/><circle cx="588.7" cy="372.3" r="1.7" fill="#1f77b4"/><circle cx="564.8" cy="346.0" r="1.7" fill="#1f77b4"/><circle cx="568.9" cy="346.2" r="1.7" fill="#1f77b4"/><circle cx="556.9" cy="337.7" r="1.7" fill="#1f77b4"/><circle cx="575.6" cy="326.4" r="1.7" fill="#1f77b4"/><circle cx="580.7" cy="378.8" r="1.7" fill="#1f77b4"/><circle cx="566.7" cy="386.5" r="1.7" fill="#1f77b4"/><circle cx="536.2" cy="362.5" r="1.7" fill="#1f77b4"/><circle cx="576.3" cy="350.7" r="1.7" fill="#1f77b4"/><circle cx="548.4" cy="373.9" r="1.7" fill="#1f77b4"/><circle cx="569.8" cy="353.4" r="1.7" fill="#1f77b4"/><circle cx="588.7" cy="388.2" r="1.7" fill="#1f77b4"/><circle cx="579.4" cy="378.4" r="1.7" fill="#1f77b4"/><circle cx="606.5" cy="370.9" r="1.7" fill="#1f77b4"/><circle cx="601.4" cy="321.4" r="1.7" fill="#1f77b4"/><circle cx="555.8" cy="386.4" r="1.7" fill="#1f77b4"/><circle cx="554.9" cy="348.5" r="1.7" fill="#1f77b4"/><circle cx="607.5" cy="369.8" r="1.7" fill="#1f77b4"/><circle cx="577.9" cy="402.8" r="1.7" fill="#1f77b4"/><circle cx="569.4" cy="342.3" r="1.7" fill="#1f77b4"/><circle cx="585.3" cy="351.9" r="1.7" fill="#1f77b4"/><circle cx="609.2" cy="401.8" r="1.7" fill="#1f77b4"/><circle cx="535.9" cy="362.8" r="1.7" fill="#1f77b4"/><circle cx="553.1" cy="393.1" r="1.7" fill="#1f77b4"/><circle cx="563.9" cy="396.5" r="1.7" fill="#1f77b4"/></svg><div style="position:absolute;right:446px;top:137.24px;font-size:8.9px;line-height:8.9px;color:#383838;font-weight:normal;white-space:pre;text-align:right;transform:scaleX(0.9);transform-origin:100% 50%;-webkit-text-stroke:0.08px #333">0.0035</div><div style="position:absolute;right:446px;top:168.82px;font-size:8.9px;line-height:8.9px;color:#383838;font-weight:normal;white-space:pre;text-align:right;transform:scaleX(0.9);transform-origin:100% 50%;-webkit-text-stroke:0.08px #333">0.003</div><div style="position:absolute;right:446px;top:200.39px;font-size:8.9px;line-height:8.9px;color:#383838;font-weight:normal;white-space:pre;text-align:right;transform:scaleX(0.9);transform-origin:100% 50%;-webkit-text-stroke:0.08px #333">0.0025</div><div style="position:absolute;right:446px;top:231.97px;font-size:8.9px;line-height:8.9px;color:#383838;font-weight:normal;white-space:pre;text-align:right;transform:scaleX(0.9);transform-origin:100% 50%;-webkit-text-stroke:0.08px #333">0.002</div><div style="position:absolute;right:446px;top:263.54px;font-size:8.9px;line-height:8.9px;color:#383838;font-weight:normal;white-space:pre;text-align:right;transform:scaleX(0.9);transform-origin:100% 50%;-webkit-text-stroke:0.08px #333">0.0015</div><div style="position:absolute;right:446px;top:295.12px;font-size:8.9px;line-height:8.9px;color:#383838;font-weight:normal;white-space:pre;text-align:right;transform:scaleX(0.9);transform-origin:100% 50%;-webkit-text-stroke:0.08px #333">0.001</div><div style="position:absolute;right:446px;top:326.69px;font-size:8.9px;line-height:8.9px;color:#383838;font-weight:normal;white-space:pre;text-align:right;transform:scaleX(0.9);transform-origin:100% 50%;-webkit-text-stroke:0.08px #333">0.0005</div><div style="position:absolute;right:446px;top:358.27px;font-size:8.9px;line-height:8.9px;color:#383838;font-weight:normal;white-space:pre;text-align:right;transform:scaleX(0.9);transform-origin:100% 50%;-webkit-text-stroke:0.08px #333">0</div><div style="position:absolute;right:446px;top:389.84px;font-size:8.9px;line-height:8.9px;color:#383838;font-weight:normal;white-space:pre;text-align:right;transform:scaleX(0.9);transform-origin:100% 50%;-webkit-text-stroke:0.08px #333">-0.0005</div><div style="position:absolute;right:446px;top:421.42px;font-size:8.9px;line-height:8.9px;color:#383838;font-weight:normal;white-space:pre;text-align:right;transform:scaleX(0.9);transform-origin:100% 50%;-webkit-text-stroke:0.08px #333">-0.001</div><div style="position:absolute;right:446px;top:452.99px;font-size:8.9px;line-height:8.9px;color:#383838;font-weight:normal;white-space:pre;text-align:right;transform:scaleX(0.9);transform-origin:100% 50%;-webkit-text-stroke:0.08px #333">-0.0015</div><div style="position:absolute;right:446px;top:484.57px;font-size:8.9px;line-height:8.9px;color:#383838;font-weight:normal;white-space:pre;text-align:right;transform:scaleX(0.9);transform-origin:100% 50%;-webkit-text-stroke:0.08px #333">-0.002</div><div style="position:absolute;right:446px;top:516.14px;font-size:8.9px;line-height:8.9px;color:#383838;font-weight:normal;white-space:pre;text-align:right;transform:scaleX(0.9);transform-origin:100% 50%;-webkit-text-stroke:0.08px #333">-0.0025</div><div style="position:absolute;right:446px;top:547.72px;font-size:8.9px;line-height:8.9px;color:#383838;font-weight:normal;white-space:pre;text-align:right;transform:scaleX(0.9);transform-origin:100% 50%;-webkit-text-stroke:0.08px #333">-0.003</div><div style="position:absolute;right:446px;top:579.29px;font-size:8.9px;line-height:8.9px;color:#383838;font-weight:normal;white-space:pre;text-align:right;transform:scaleX(0.9);transform-origin:100% 50%;-webkit-text-stroke:0.08px #333">-0.0035</div><div style="position:absolute;left:280.05px;width:200px;text-align:center;top:594.77px;font-size:8.9px;line-height:8.9px;color:#383838;font-weight:normal;white-space:pre;transform:scaleX(0.9);transform-origin:50% 50%;-webkit-text-stroke:0.08px #333">-0.003</div><div style="position:absolute;left:343.2px;width:200px;text-align:center;top:594.77px;font-size:8.9px;line-height:8.9px;color:#383838;font-weight:normal;white-space:pre;transform:scaleX(0.9);transform-origin:50% 50%;-webkit-text-stroke:0.08px #333">-0.002</div><div style="position:absolute;left:406.35px;width:200px;text-align:center;top:594.77px;font-size:8.9px;line-height:8.9px;color:#383838;font-weight:normal;white-space:pre;transform:scaleX(0.9);transform-origin:50% 50%;-webkit-text-stroke:0.08px #333">-0.001</div><div style="position:absolute;left:469.5px;width:200px;text-align:center;top:594.77px;font-size:8.9px;line-height:8.9px;color:#383838;font-weight:normal;white-space:pre;transform:scaleX(0.9);transform-origin:50% 50%;-webkit-text-stroke:0.08px #333">0</div><div style="position:absolute;left:532.65px;width:200px;text-align:center;top:594.77px;font-size:8.9px;line-height:8.9px;color:#383838;font-weight:normal;white-space:pre;transform:scaleX(0.9);transform-origin:50% 50%;-webkit-text-stroke:0.08px #333">0.001</div><div style="position:absolute;left:595.8px;width:200px;text-align:center;top:594.77px;font-size:8.9px;line-height:8.9px;color:#383838;font-weight:normal;white-space:pre;transform:scaleX(0.9);transform-origin:50% 50%;-webkit-text-stroke:0.08px #333">0.002</div><div style="position:absolute;left:658.95px;width:200px;text-align:center;top:594.77px;font-size:8.9px;line-height:8.9px;color:#383838;font-weight:normal;white-space:pre;transform:scaleX(0.9);transform-origin:50% 50%;-webkit-text-stroke:0.08px #333">0.003</div>
</body></html>
